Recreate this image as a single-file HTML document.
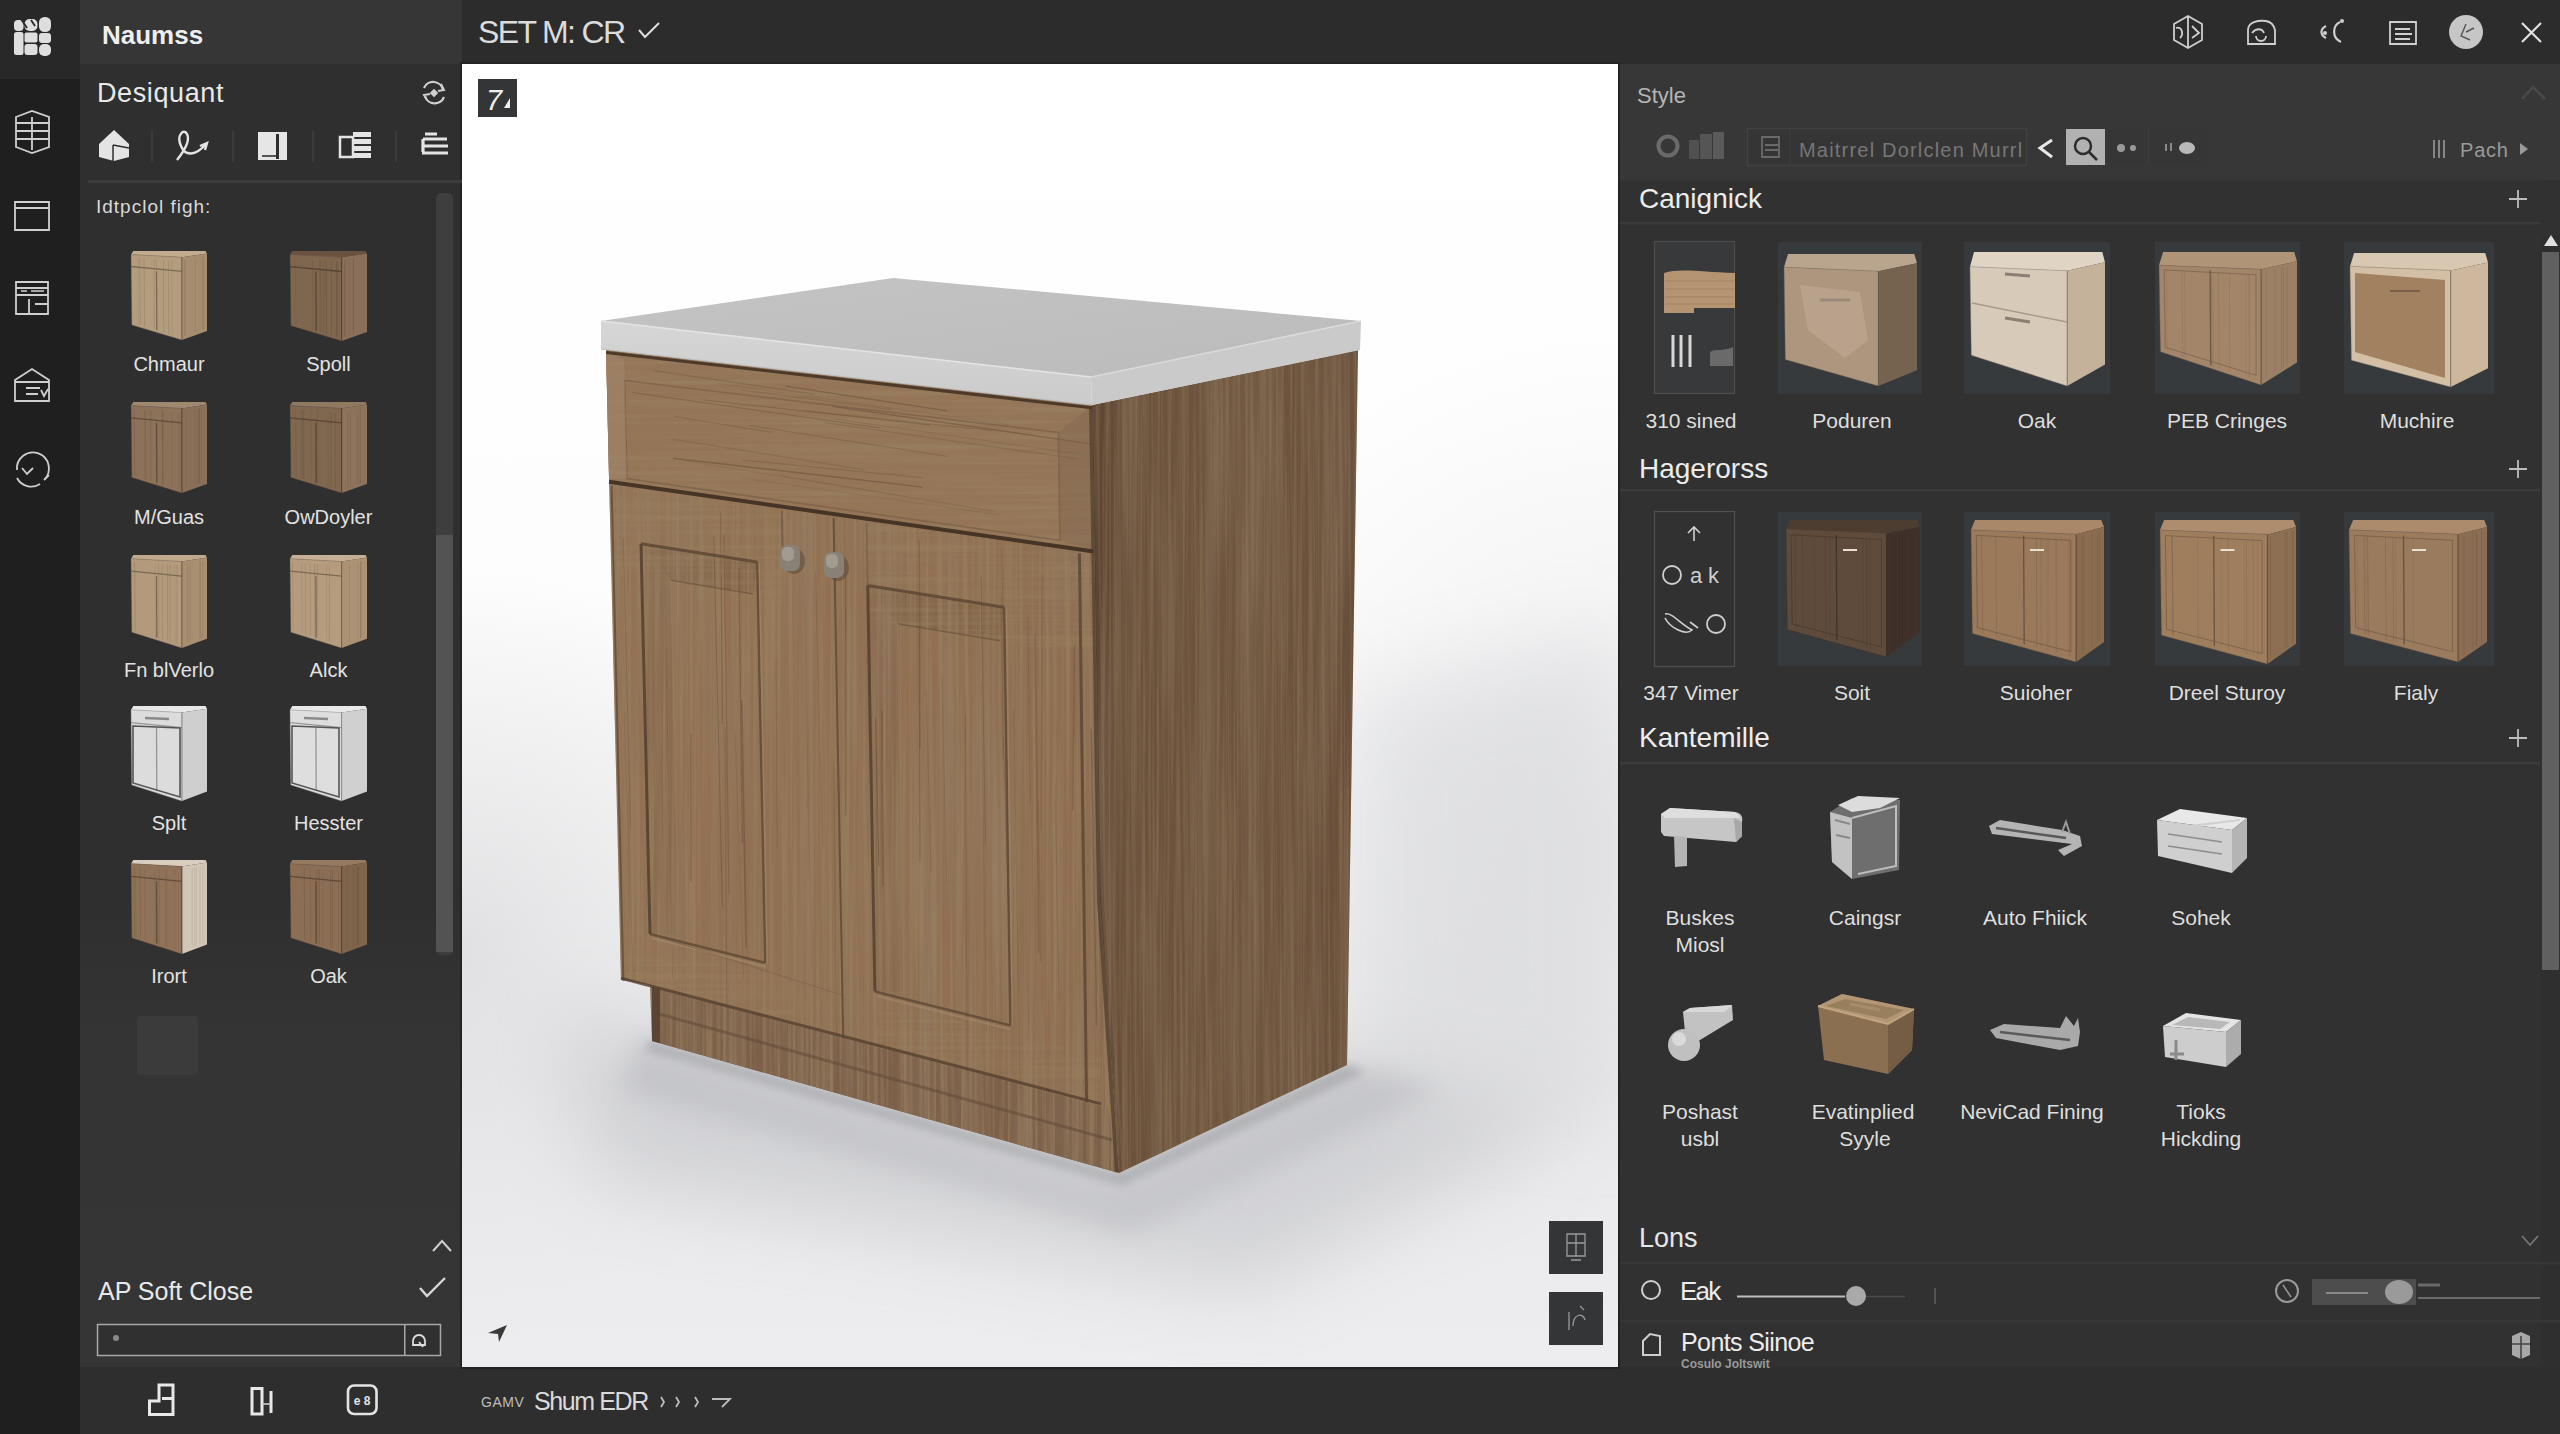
<!DOCTYPE html>
<html><head><meta charset="utf-8">
<style>
*{margin:0;padding:0}
html,body{width:2560px;height:1434px;overflow:hidden;background:#282828}
svg{position:absolute;left:0;top:0;display:block}
text{font-family:"Liberation Sans",sans-serif}
</style></head><body>
<svg width="2560" height="1434" viewBox="0 0 2560 1434">
<rect x="0" y="0" width="2560" height="1434" fill="#2c2c2c"/>
<rect x="0" y="0" width="80" height="1434" fill="#1e1f1e"/>
<rect x="0" y="0" width="80" height="79" fill="#272827"/>
<defs><linearGradient id="lpG" x1="0" y1="0" x2="0" y2="1"><stop offset="0" stop-color="#2f2f2f"/><stop offset="0.66" stop-color="#2f2f2f"/><stop offset="0.76" stop-color="#343434"/><stop offset="1" stop-color="#353535"/></linearGradient></defs>
<rect x="80" y="0" width="382" height="1367" fill="url(#lpG)"/>
<rect x="80" y="0" width="382" height="64" fill="#363636"/>
<rect x="462" y="0" width="2098" height="64" fill="#2c2c2c"/>
<rect x="1618" y="64" width="942" height="1303" fill="#313131"/>
<rect x="1618" y="64" width="942" height="116" fill="#373737"/>
<rect x="80" y="1367" width="2480" height="67" fill="#2e2e2e"/>
<rect x="460" y="62" width="1160" height="1307" fill="#232323"/>
<rect x="14" y="20" width="9.5" height="11" rx="4" fill="#dedede"/><rect x="24.5" y="19" width="13" height="12" rx="5" fill="#dedede"/><rect x="39" y="17" width="12" height="15" rx="5.5" fill="#dedede"/><rect x="14" y="32" width="9.5" height="23" rx="2.5" fill="#dedede"/><rect x="24.5" y="32.5" width="13" height="10" rx="2" fill="#dedede"/><rect x="39" y="33" width="12" height="10" rx="3" fill="#dedede"/><rect x="24.5" y="44" width="13" height="11" rx="3" fill="#dedede"/><rect x="39" y="44" width="12" height="12" rx="5" fill="#dedede"/><path d="M21 19 L27 28 M31 20 L35 26" stroke="#272827" stroke-width="1.8"/><path d="M16 117 L32 111 L49 117 L49 147 L32 153 L16 147 Z M16 123 H49 M16 131 H49 M16 139 H49 M32 117 V150" fill="none" stroke="#cfcfcf" stroke-width="1.8"/><path d="M15 202 H49 V230 H15 Z M15 208 H49" fill="none" stroke="#cfcfcf" stroke-width="1.8"/><path d="M16 282 H48 V314 H16 Z M16 288 H48 M16 295 H48 M29 299 V314 M35 304 H48" fill="none" stroke="#cfcfcf" stroke-width="1.8"/><path d="M21 291 H27 M31 291 H44" stroke="#cfcfcf" stroke-width="1.4"/><path d="M15 380 L32 369 L49 380 V401 H15 Z M15 382 H49 M26 388 H40 M26 394 H38 M41 390 L44 396 L48 389" fill="none" stroke="#cfcfcf" stroke-width="1.8"/><path d="M17 470 A16 16 0 1 1 44 480 M44 480 L49 475 M17 478 A16 16 0 0 0 40 484 M22 468 L27 474 L33 468" fill="none" stroke="#cfcfcf" stroke-width="1.8"/>
<text x="102" y="44" font-size="26" fill="#efefef" text-anchor="start" font-weight="bold">Naumss</text>
<text x="97" y="102" font-size="27" fill="#e8e8e8" text-anchor="start" letter-spacing="0.6">Desiquant</text>
<path d="M424 88 A10 10 0 0 1 443 90 M444 97 A10 10 0 0 1 425 96" fill="none" stroke="#cfcfcf" stroke-width="2.2"/>
<path d="M441 84 L444 90 L438 91 M427 100 L424 95 L430 94" fill="none" stroke="#cfcfcf" stroke-width="2"/>
<rect x="431" y="90" width="6" height="6" fill="#cfcfcf" transform="rotate(45 434 93)"/>
<path d="M99 144 L114 130 L129 144 L129 157 L114 161 L99 157 Z" fill="#e4e4e4"/>
<path d="M113 145 L113 161 M113 145 L129 148" stroke="#2e2e2e" stroke-width="1.5" fill="none"/>
<path d="M177 160 C185 150 190 140 187 134 C184 128 176 135 181 146 C185 156 195 157 207 143 M200 146 L207 143 L205 150" fill="none" stroke="#e4e4e4" stroke-width="2.4"/>
<rect x="258" y="132" width="29" height="28" fill="#e6e6e6"/>
<rect x="276" y="134" width="3" height="25" fill="#2e2e2e"/>
<rect x="262" y="155" width="14" height="2" fill="#555"/>
<path d="M340 137 H353 V157 H340 Z" fill="none" stroke="#e4e4e4" stroke-width="2.5"/>
<rect x="353" y="132" width="18" height="5" fill="#e4e4e4"/>
<rect x="353" y="139" width="18" height="5" fill="#e4e4e4"/>
<rect x="353" y="146" width="18" height="5" fill="#e4e4e4"/>
<rect x="353" y="153" width="18" height="5" fill="#e4e4e4"/>
<path d="M425 134 H437 M423 139 H447 M422 146 H448 M422 153 H448 M423 139 V152" fill="none" stroke="#e4e4e4" stroke-width="3.2"/>
<rect x="151" y="131" width="2" height="31" fill="#3a3a3a"/>
<rect x="232" y="131" width="2" height="31" fill="#3a3a3a"/>
<rect x="312" y="131" width="2" height="31" fill="#3a3a3a"/>
<rect x="395" y="131" width="2" height="31" fill="#3a3a3a"/>
<rect x="88" y="180" width="374" height="3" fill="#3b3d3d"/>
<text x="96" y="213" font-size="19" fill="#d9d9d9" text-anchor="start" letter-spacing="1">Idtpclol figh:</text>
<rect x="436" y="193" width="17" height="762" fill="#3e3e3e" rx="5"/>
<rect x="436" y="535" width="17" height="417" fill="#535353"/>
<polygon points="131.0,254.6 133.3,251.0 205.5,251.0 207.0,253.5 181.9,257.2" fill="#c2ab8f"/><polygon points="181.9,257.2 207.0,253.5 207.0,331.1 181.9,340.0" fill="#a68d70"/><polygon points="131.0,254.6 181.9,257.2 181.9,340.0 131.8,324.9" fill="#b49c7e"/><line x1="139.7" y1="258.6" x2="140.3" y2="325.3" stroke="#7a6a55" stroke-width="0.8" opacity="0.36"/><line x1="168.6" y1="260.5" x2="168.7" y2="333.6" stroke="#7a6a55" stroke-width="0.8" opacity="0.21"/><line x1="156.3" y1="259.7" x2="156.6" y2="330.1" stroke="#7a6a55" stroke-width="0.8" opacity="0.26"/><line x1="163.4" y1="260.2" x2="163.7" y2="332.2" stroke="#7a6a55" stroke-width="0.8" opacity="0.35"/><line x1="137.9" y1="258.5" x2="138.5" y2="324.7" stroke="#7a6a55" stroke-width="0.8" opacity="0.16"/><line x1="171.9" y1="260.7" x2="172.0" y2="334.6" stroke="#7a6a55" stroke-width="0.8" opacity="0.26"/><line x1="168.5" y1="260.5" x2="168.7" y2="333.6" stroke="#7a6a55" stroke-width="0.8" opacity="0.15"/><line x1="154.0" y1="259.6" x2="154.4" y2="329.4" stroke="#7a6a55" stroke-width="0.8" opacity="0.33"/><line x1="144.1" y1="258.9" x2="144.6" y2="326.5" stroke="#7a6a55" stroke-width="0.8" opacity="0.39"/><line x1="202.5" y1="257.2" x2="202.5" y2="329.7" stroke="#7c6954" stroke-width="0.8" opacity="0.35"/><line x1="185.0" y1="259.8" x2="185.0" y2="335.9" stroke="#7c6954" stroke-width="0.8" opacity="0.35"/><line x1="184.9" y1="259.8" x2="184.9" y2="335.9" stroke="#7c6954" stroke-width="0.8" opacity="0.35"/><line x1="195.3" y1="258.2" x2="195.3" y2="332.3" stroke="#7c6954" stroke-width="0.8" opacity="0.35"/><line x1="203.3" y1="257.0" x2="203.3" y2="329.4" stroke="#7c6954" stroke-width="0.8" opacity="0.35"/><line x1="131.1" y1="266.5" x2="181.9" y2="271.3" stroke="#7a6a55" stroke-width="1.3"/><line x1="156.5" y1="271.2" x2="156.8" y2="330.1" stroke="#7a6a55" stroke-width="1.3"/><line x1="181.9" y1="257.2" x2="181.9" y2="340.0" stroke="#635545" stroke-width="1" opacity="0.6"/><line x1="131.0" y1="254.6" x2="181.9" y2="257.2" stroke="#bfaa91" stroke-width="1" opacity="0.7"/><polygon points="131.0,254.6 181.9,257.2 181.9,340.0 131.8,324.9" fill="none" stroke="#6c5d4b" stroke-width="0.8" opacity="0.5"/>
<text x="169.0" y="371" font-size="20" fill="#e2e2e2" text-anchor="middle" >Chmaur</text>
<polygon points="290.0,254.6 292.3,251.0 365.5,251.0 367.0,253.5 341.6,257.3" fill="#6a5240"/><polygon points="341.6,257.3 367.0,253.5 367.0,332.0 341.6,341.0" fill="#8a705a"/><polygon points="290.0,254.6 341.6,257.3 341.6,341.0 290.8,325.7" fill="#7f664f"/><line x1="337.0" y1="261.2" x2="337.0" y2="337.2" stroke="#564535" stroke-width="0.8" opacity="0.39"/><line x1="295.2" y1="258.5" x2="295.9" y2="325.1" stroke="#564535" stroke-width="0.8" opacity="0.17"/><line x1="331.4" y1="260.8" x2="331.5" y2="335.5" stroke="#564535" stroke-width="0.8" opacity="0.33"/><line x1="323.7" y1="260.3" x2="323.9" y2="333.3" stroke="#564535" stroke-width="0.8" opacity="0.23"/><line x1="320.7" y1="260.1" x2="321.0" y2="332.5" stroke="#564535" stroke-width="0.8" opacity="0.30"/><line x1="319.6" y1="260.1" x2="319.9" y2="332.1" stroke="#564535" stroke-width="0.8" opacity="0.19"/><line x1="312.6" y1="259.6" x2="313.0" y2="330.1" stroke="#564535" stroke-width="0.8" opacity="0.25"/><line x1="326.2" y1="260.5" x2="326.4" y2="334.0" stroke="#564535" stroke-width="0.8" opacity="0.40"/><line x1="336.7" y1="261.2" x2="336.7" y2="337.1" stroke="#564535" stroke-width="0.8" opacity="0.29"/><line x1="353.2" y1="258.6" x2="353.2" y2="333.9" stroke="#675443" stroke-width="0.8" opacity="0.35"/><line x1="349.6" y1="259.1" x2="349.6" y2="335.2" stroke="#675443" stroke-width="0.8" opacity="0.35"/><line x1="344.9" y1="259.8" x2="344.9" y2="336.8" stroke="#675443" stroke-width="0.8" opacity="0.35"/><line x1="344.7" y1="259.8" x2="344.7" y2="336.9" stroke="#675443" stroke-width="0.8" opacity="0.35"/><line x1="353.6" y1="258.5" x2="353.6" y2="333.8" stroke="#675443" stroke-width="0.8" opacity="0.35"/><line x1="290.1" y1="266.7" x2="341.6" y2="271.5" stroke="#564535" stroke-width="1.3"/><line x1="315.9" y1="271.4" x2="316.2" y2="331.0" stroke="#564535" stroke-width="1.3"/><line x1="341.6" y1="257.3" x2="341.6" y2="341.0" stroke="#45382b" stroke-width="1" opacity="0.6"/><line x1="290.0" y1="254.6" x2="341.6" y2="257.3" stroke="#927c69" stroke-width="1" opacity="0.7"/><polygon points="290.0,254.6 341.6,257.3 341.6,341.0 290.8,325.7" fill="none" stroke="#4c3d2f" stroke-width="0.8" opacity="0.5"/>
<text x="328.5" y="371" font-size="20" fill="#e2e2e2" text-anchor="middle" >Spoll</text>
<polygon points="131.0,405.6 133.3,402.0 205.5,402.0 207.0,404.5 181.9,408.4" fill="#a08770"/><polygon points="181.9,408.4 207.0,404.5 207.0,483.9 181.9,493.0" fill="#8a7059"/><polygon points="131.0,405.6 181.9,408.4 181.9,493.0 131.8,477.5" fill="#8c7258"/><line x1="144.5" y1="410.1" x2="145.0" y2="479.4" stroke="#5f4d3b" stroke-width="0.8" opacity="0.29"/><line x1="150.5" y1="410.5" x2="151.0" y2="481.2" stroke="#5f4d3b" stroke-width="0.8" opacity="0.30"/><line x1="162.2" y1="411.3" x2="162.5" y2="484.6" stroke="#5f4d3b" stroke-width="0.8" opacity="0.17"/><line x1="134.2" y1="409.4" x2="134.8" y2="476.3" stroke="#5f4d3b" stroke-width="0.8" opacity="0.36"/><line x1="145.5" y1="410.2" x2="146.0" y2="479.6" stroke="#5f4d3b" stroke-width="0.8" opacity="0.21"/><line x1="179.2" y1="412.4" x2="179.2" y2="489.6" stroke="#5f4d3b" stroke-width="0.8" opacity="0.27"/><line x1="171.9" y1="411.9" x2="172.0" y2="487.5" stroke="#5f4d3b" stroke-width="0.8" opacity="0.27"/><line x1="162.8" y1="411.3" x2="163.1" y2="484.8" stroke="#5f4d3b" stroke-width="0.8" opacity="0.19"/><line x1="162.7" y1="411.3" x2="162.9" y2="484.7" stroke="#5f4d3b" stroke-width="0.8" opacity="0.37"/><line x1="194.9" y1="409.4" x2="194.9" y2="485.3" stroke="#675442" stroke-width="0.8" opacity="0.35"/><line x1="199.3" y1="408.7" x2="199.3" y2="483.7" stroke="#675442" stroke-width="0.8" opacity="0.35"/><line x1="197.9" y1="408.9" x2="197.9" y2="484.2" stroke="#675442" stroke-width="0.8" opacity="0.35"/><line x1="185.7" y1="410.8" x2="185.7" y2="488.6" stroke="#675442" stroke-width="0.8" opacity="0.35"/><line x1="199.6" y1="408.7" x2="199.6" y2="483.6" stroke="#675442" stroke-width="0.8" opacity="0.35"/><line x1="131.1" y1="417.9" x2="181.9" y2="422.8" stroke="#5f4d3b" stroke-width="1.3"/><line x1="156.5" y1="422.7" x2="156.8" y2="482.9" stroke="#5f4d3b" stroke-width="1.3"/><line x1="181.9" y1="408.4" x2="181.9" y2="493.0" stroke="#4d3e30" stroke-width="1" opacity="0.6"/><line x1="131.0" y1="405.6" x2="181.9" y2="408.4" stroke="#9d8771" stroke-width="1" opacity="0.7"/><polygon points="131.0,405.6 181.9,408.4 181.9,493.0 131.8,477.5" fill="none" stroke="#544434" stroke-width="0.8" opacity="0.5"/>
<text x="169.0" y="524" font-size="20" fill="#e2e2e2" text-anchor="middle" >M/Guas</text>
<polygon points="290.0,405.6 292.3,402.0 365.5,402.0 367.0,404.5 341.6,408.4" fill="#917860"/><polygon points="341.6,408.4 367.0,404.5 367.0,483.9 341.6,493.0" fill="#8d735b"/><polygon points="290.0,405.6 341.6,408.4 341.6,493.0 290.8,477.5" fill="#80674f"/><line x1="303.6" y1="410.1" x2="304.1" y2="479.3" stroke="#574635" stroke-width="0.8" opacity="0.18"/><line x1="311.0" y1="410.6" x2="311.4" y2="481.5" stroke="#574635" stroke-width="0.8" opacity="0.19"/><line x1="295.7" y1="409.6" x2="296.3" y2="477.0" stroke="#574635" stroke-width="0.8" opacity="0.25"/><line x1="335.2" y1="412.2" x2="335.3" y2="488.6" stroke="#574635" stroke-width="0.8" opacity="0.35"/><line x1="328.1" y1="411.7" x2="328.3" y2="486.5" stroke="#574635" stroke-width="0.8" opacity="0.21"/><line x1="317.5" y1="411.0" x2="317.8" y2="483.4" stroke="#574635" stroke-width="0.8" opacity="0.22"/><line x1="300.6" y1="409.9" x2="301.2" y2="478.5" stroke="#574635" stroke-width="0.8" opacity="0.18"/><line x1="302.6" y1="410.1" x2="303.1" y2="479.0" stroke="#574635" stroke-width="0.8" opacity="0.38"/><line x1="331.1" y1="411.9" x2="331.2" y2="487.4" stroke="#574635" stroke-width="0.8" opacity="0.35"/><line x1="360.4" y1="408.5" x2="360.4" y2="483.3" stroke="#695644" stroke-width="0.8" opacity="0.35"/><line x1="348.1" y1="410.4" x2="348.1" y2="487.7" stroke="#695644" stroke-width="0.8" opacity="0.35"/><line x1="350.4" y1="410.0" x2="350.4" y2="486.8" stroke="#695644" stroke-width="0.8" opacity="0.35"/><line x1="356.9" y1="409.1" x2="356.9" y2="484.5" stroke="#695644" stroke-width="0.8" opacity="0.35"/><line x1="359.0" y1="408.7" x2="359.0" y2="483.8" stroke="#695644" stroke-width="0.8" opacity="0.35"/><line x1="290.1" y1="417.9" x2="341.6" y2="422.8" stroke="#574635" stroke-width="1.3"/><line x1="315.9" y1="422.7" x2="316.2" y2="482.9" stroke="#574635" stroke-width="1.3"/><line x1="341.6" y1="408.4" x2="341.6" y2="493.0" stroke="#46382b" stroke-width="1" opacity="0.6"/><line x1="290.0" y1="405.6" x2="341.6" y2="408.4" stroke="#937d69" stroke-width="1" opacity="0.7"/><polygon points="290.0,405.6 341.6,408.4 341.6,493.0 290.8,477.5" fill="none" stroke="#4c3d2f" stroke-width="0.8" opacity="0.5"/>
<text x="328.5" y="524" font-size="20" fill="#e2e2e2" text-anchor="middle" >OwDoyler</text>
<polygon points="131.0,558.7 133.3,555.0 205.5,555.0 207.0,557.6 181.9,561.5" fill="#c0a98d"/><polygon points="181.9,561.5 207.0,557.6 207.0,638.7 181.9,648.0" fill="#a88f72"/><polygon points="131.0,558.7 181.9,561.5 181.9,648.0 131.8,632.2" fill="#b39a7c"/><line x1="162.1" y1="564.5" x2="162.4" y2="639.4" stroke="#796854" stroke-width="0.8" opacity="0.34"/><line x1="170.0" y1="565.0" x2="170.2" y2="641.8" stroke="#796854" stroke-width="0.8" opacity="0.39"/><line x1="167.5" y1="564.9" x2="167.7" y2="641.0" stroke="#796854" stroke-width="0.8" opacity="0.38"/><line x1="134.9" y1="562.7" x2="135.6" y2="631.2" stroke="#796854" stroke-width="0.8" opacity="0.27"/><line x1="176.8" y1="565.5" x2="176.9" y2="643.8" stroke="#796854" stroke-width="0.8" opacity="0.31"/><line x1="174.8" y1="565.4" x2="174.9" y2="643.3" stroke="#796854" stroke-width="0.8" opacity="0.18"/><line x1="155.1" y1="564.0" x2="155.4" y2="637.3" stroke="#796854" stroke-width="0.8" opacity="0.21"/><line x1="158.5" y1="564.2" x2="158.8" y2="638.3" stroke="#796854" stroke-width="0.8" opacity="0.29"/><line x1="134.2" y1="562.6" x2="134.8" y2="630.9" stroke="#796854" stroke-width="0.8" opacity="0.20"/><line x1="190.0" y1="563.2" x2="190.0" y2="642.0" stroke="#7e6b55" stroke-width="0.8" opacity="0.35"/><line x1="202.8" y1="561.3" x2="202.8" y2="637.3" stroke="#7e6b55" stroke-width="0.8" opacity="0.35"/><line x1="199.8" y1="561.7" x2="199.8" y2="638.4" stroke="#7e6b55" stroke-width="0.8" opacity="0.35"/><line x1="187.6" y1="563.6" x2="187.6" y2="642.9" stroke="#7e6b55" stroke-width="0.8" opacity="0.35"/><line x1="200.4" y1="561.6" x2="200.4" y2="638.1" stroke="#7e6b55" stroke-width="0.8" opacity="0.35"/><line x1="131.1" y1="571.2" x2="181.9" y2="576.2" stroke="#796854" stroke-width="1.3"/><line x1="156.5" y1="576.1" x2="156.8" y2="637.7" stroke="#796854" stroke-width="1.3"/><line x1="181.9" y1="561.5" x2="181.9" y2="648.0" stroke="#625444" stroke-width="1" opacity="0.6"/><line x1="131.0" y1="558.7" x2="181.9" y2="561.5" stroke="#bea98f" stroke-width="1" opacity="0.7"/><polygon points="131.0,558.7 181.9,561.5 181.9,648.0 131.8,632.2" fill="none" stroke="#6b5c4a" stroke-width="0.8" opacity="0.5"/>
<text x="169.0" y="677" font-size="20" fill="#e2e2e2" text-anchor="middle" >Fn blVerlo</text>
<polygon points="290.0,558.7 292.3,555.0 365.5,555.0 367.0,557.6 341.6,561.5" fill="#c5b095"/><polygon points="341.6,561.5 367.0,557.6 367.0,638.7 341.6,648.0" fill="#ab9275"/><polygon points="290.0,558.7 341.6,561.5 341.6,648.0 290.8,632.2" fill="#b59c7e"/><line x1="329.4" y1="565.0" x2="329.6" y2="641.8" stroke="#7b6a55" stroke-width="0.8" opacity="0.36"/><line x1="315.1" y1="564.1" x2="315.5" y2="637.5" stroke="#7b6a55" stroke-width="0.8" opacity="0.22"/><line x1="292.6" y1="562.6" x2="293.3" y2="630.8" stroke="#7b6a55" stroke-width="0.8" opacity="0.32"/><line x1="314.4" y1="564.0" x2="314.8" y2="637.3" stroke="#7b6a55" stroke-width="0.8" opacity="0.34"/><line x1="309.9" y1="563.7" x2="310.4" y2="635.9" stroke="#7b6a55" stroke-width="0.8" opacity="0.34"/><line x1="305.3" y1="563.4" x2="305.8" y2="634.5" stroke="#7b6a55" stroke-width="0.8" opacity="0.35"/><line x1="326.5" y1="564.8" x2="326.7" y2="640.9" stroke="#7b6a55" stroke-width="0.8" opacity="0.25"/><line x1="317.6" y1="564.2" x2="317.9" y2="638.2" stroke="#7b6a55" stroke-width="0.8" opacity="0.32"/><line x1="301.6" y1="563.2" x2="302.1" y2="633.4" stroke="#7b6a55" stroke-width="0.8" opacity="0.29"/><line x1="360.5" y1="561.6" x2="360.5" y2="638.1" stroke="#806d57" stroke-width="0.8" opacity="0.35"/><line x1="349.5" y1="563.3" x2="349.5" y2="642.1" stroke="#806d57" stroke-width="0.8" opacity="0.35"/><line x1="360.5" y1="561.6" x2="360.5" y2="638.1" stroke="#806d57" stroke-width="0.8" opacity="0.35"/><line x1="358.1" y1="562.0" x2="358.1" y2="639.0" stroke="#806d57" stroke-width="0.8" opacity="0.35"/><line x1="361.3" y1="561.5" x2="361.3" y2="637.8" stroke="#806d57" stroke-width="0.8" opacity="0.35"/><line x1="290.1" y1="571.2" x2="341.6" y2="576.2" stroke="#7b6a55" stroke-width="1.3"/><line x1="315.9" y1="576.1" x2="316.2" y2="637.7" stroke="#7b6a55" stroke-width="1.3"/><line x1="341.6" y1="561.5" x2="341.6" y2="648.0" stroke="#635545" stroke-width="1" opacity="0.6"/><line x1="290.0" y1="558.7" x2="341.6" y2="561.5" stroke="#c0aa91" stroke-width="1" opacity="0.7"/><polygon points="290.0,558.7 341.6,561.5 341.6,648.0 290.8,632.2" fill="none" stroke="#6c5d4b" stroke-width="0.8" opacity="0.5"/>
<text x="328.5" y="677" font-size="20" fill="#e2e2e2" text-anchor="middle" >Alck</text>
<polygon points="131.0,709.8 133.3,706.0 205.5,706.0 207.0,708.7 181.9,712.6" fill="#e8e8e8"/><polygon points="181.9,712.6 207.0,708.7 207.0,791.5 181.9,801.0" fill="#cfcfcf"/><polygon points="131.0,709.8 181.9,712.6 181.9,801.0 131.8,784.9" fill="#dcdcdc"/><line x1="131.1" y1="722.6" x2="181.9" y2="727.7" stroke="#959595" stroke-width="1.3"/><line x1="156.5" y1="727.6" x2="156.8" y2="790.5" stroke="#959595" stroke-width="1.3"/><line x1="181.9" y1="712.6" x2="181.9" y2="801.0" stroke="#797979" stroke-width="1" opacity="0.6"/><line x1="131.0" y1="709.8" x2="181.9" y2="712.6" stroke="#e1e1e1" stroke-width="1" opacity="0.7"/><polygon points="131.0,709.8 181.9,712.6 181.9,801.0 131.8,784.9" fill="none" stroke="#848484" stroke-width="0.8" opacity="0.5"/>
<polygon points="133.0,726.0 180.0,728.0 180.0,797.0 133.0,783.0" fill="none" stroke="#555" stroke-width="1.6"/>
<line x1="145.0" y1="718.0" x2="169.0" y2="719.0" stroke="#8a8a8a" stroke-width="2.5"/>
<text x="169.0" y="830" font-size="20" fill="#e2e2e2" text-anchor="middle" >Splt</text>
<polygon points="290.0,709.8 292.3,706.0 365.5,706.0 367.0,708.7 341.6,712.6" fill="#e9e9e9"/><polygon points="341.6,712.6 367.0,708.7 367.0,791.5 341.6,801.0" fill="#d0d0d0"/><polygon points="290.0,709.8 341.6,712.6 341.6,801.0 290.8,784.9" fill="#dedede"/><line x1="290.1" y1="722.6" x2="341.6" y2="727.7" stroke="#969696" stroke-width="1.3"/><line x1="315.9" y1="727.6" x2="316.2" y2="790.5" stroke="#969696" stroke-width="1.3"/><line x1="341.6" y1="712.6" x2="341.6" y2="801.0" stroke="#7a7a7a" stroke-width="1" opacity="0.6"/><line x1="290.0" y1="709.8" x2="341.6" y2="712.6" stroke="#e2e2e2" stroke-width="1" opacity="0.7"/><polygon points="290.0,709.8 341.6,712.6 341.6,801.0 290.8,784.9" fill="none" stroke="#858585" stroke-width="0.8" opacity="0.5"/>
<polygon points="292.0,726.0 339.0,728.0 339.0,797.0 292.0,783.0" fill="none" stroke="#555" stroke-width="1.6"/>
<line x1="304.0" y1="718.0" x2="328.0" y2="719.0" stroke="#8a8a8a" stroke-width="2.5"/>
<text x="328.5" y="830" font-size="20" fill="#e2e2e2" text-anchor="middle" >Hesster</text>
<polygon points="131.0,863.8 133.3,860.0 205.5,860.0 207.0,862.6 181.9,866.6" fill="#d8cdbf"/><polygon points="181.9,866.6 207.0,862.6 207.0,944.6 181.9,954.0" fill="#d2c6b6"/><polygon points="131.0,863.8 181.9,866.6 181.9,954.0 131.8,938.0" fill="#8f7257"/><line x1="154.8" y1="869.1" x2="155.2" y2="943.1" stroke="#614d3b" stroke-width="0.8" opacity="0.24"/><line x1="139.9" y1="868.1" x2="140.5" y2="938.5" stroke="#614d3b" stroke-width="0.8" opacity="0.37"/><line x1="133.9" y1="867.7" x2="134.5" y2="936.7" stroke="#614d3b" stroke-width="0.8" opacity="0.28"/><line x1="174.7" y1="870.5" x2="174.8" y2="949.2" stroke="#614d3b" stroke-width="0.8" opacity="0.17"/><line x1="159.0" y1="869.4" x2="159.3" y2="944.3" stroke="#614d3b" stroke-width="0.8" opacity="0.30"/><line x1="135.5" y1="867.8" x2="136.1" y2="937.1" stroke="#614d3b" stroke-width="0.8" opacity="0.24"/><line x1="165.8" y1="869.8" x2="166.0" y2="946.4" stroke="#614d3b" stroke-width="0.8" opacity="0.26"/><line x1="166.8" y1="869.9" x2="167.0" y2="946.7" stroke="#614d3b" stroke-width="0.8" opacity="0.19"/><line x1="144.5" y1="868.4" x2="145.0" y2="939.9" stroke="#614d3b" stroke-width="0.8" opacity="0.18"/><line x1="194.6" y1="867.6" x2="194.6" y2="946.3" stroke="#9d9488" stroke-width="0.8" opacity="0.35"/><line x1="203.0" y1="866.3" x2="203.0" y2="943.1" stroke="#9d9488" stroke-width="0.8" opacity="0.35"/><line x1="196.3" y1="867.3" x2="196.3" y2="945.6" stroke="#9d9488" stroke-width="0.8" opacity="0.35"/><line x1="200.0" y1="866.7" x2="200.0" y2="944.2" stroke="#9d9488" stroke-width="0.8" opacity="0.35"/><line x1="192.1" y1="868.0" x2="192.1" y2="947.2" stroke="#9d9488" stroke-width="0.8" opacity="0.35"/><line x1="131.1" y1="876.4" x2="181.9" y2="881.4" stroke="#614d3b" stroke-width="1.3"/><line x1="156.5" y1="881.3" x2="156.8" y2="943.6" stroke="#614d3b" stroke-width="1.3"/><line x1="181.9" y1="866.6" x2="181.9" y2="954.0" stroke="#4e3e2f" stroke-width="1" opacity="0.6"/><line x1="131.0" y1="863.8" x2="181.9" y2="866.6" stroke="#9f8770" stroke-width="1" opacity="0.7"/><polygon points="131.0,863.8 181.9,866.6 181.9,954.0 131.8,938.0" fill="none" stroke="#554434" stroke-width="0.8" opacity="0.5"/>
<text x="169.0" y="983" font-size="20" fill="#e2e2e2" text-anchor="middle" >Irort</text>
<polygon points="290.0,863.8 292.3,860.0 365.5,860.0 367.0,862.6 341.6,866.6" fill="#957a60"/><polygon points="341.6,866.6 367.0,862.6 367.0,944.6 341.6,954.0" fill="#80654d"/><polygon points="290.0,863.8 341.6,866.6 341.6,954.0 290.8,938.0" fill="#8b6e53"/><line x1="319.1" y1="869.4" x2="319.4" y2="944.6" stroke="#5e4a38" stroke-width="0.8" opacity="0.26"/><line x1="319.4" y1="869.5" x2="319.7" y2="944.7" stroke="#5e4a38" stroke-width="0.8" opacity="0.20"/><line x1="330.4" y1="870.2" x2="330.5" y2="948.0" stroke="#5e4a38" stroke-width="0.8" opacity="0.36"/><line x1="322.9" y1="869.7" x2="323.2" y2="945.7" stroke="#5e4a38" stroke-width="0.8" opacity="0.19"/><line x1="316.8" y1="869.3" x2="317.1" y2="943.9" stroke="#5e4a38" stroke-width="0.8" opacity="0.23"/><line x1="304.2" y1="868.4" x2="304.7" y2="940.1" stroke="#5e4a38" stroke-width="0.8" opacity="0.39"/><line x1="338.9" y1="870.8" x2="338.9" y2="950.5" stroke="#5e4a38" stroke-width="0.8" opacity="0.16"/><line x1="332.5" y1="870.3" x2="332.6" y2="948.6" stroke="#5e4a38" stroke-width="0.8" opacity="0.30"/><line x1="310.3" y1="868.8" x2="310.8" y2="941.9" stroke="#5e4a38" stroke-width="0.8" opacity="0.22"/><line x1="357.9" y1="867.1" x2="357.9" y2="945.0" stroke="#604b39" stroke-width="0.8" opacity="0.35"/><line x1="353.4" y1="867.7" x2="353.4" y2="946.6" stroke="#604b39" stroke-width="0.8" opacity="0.35"/><line x1="358.1" y1="867.0" x2="358.1" y2="944.9" stroke="#604b39" stroke-width="0.8" opacity="0.35"/><line x1="357.6" y1="867.1" x2="357.6" y2="945.1" stroke="#604b39" stroke-width="0.8" opacity="0.35"/><line x1="346.8" y1="868.8" x2="346.8" y2="949.1" stroke="#604b39" stroke-width="0.8" opacity="0.35"/><line x1="290.1" y1="876.4" x2="341.6" y2="881.4" stroke="#5e4a38" stroke-width="1.3"/><line x1="315.9" y1="881.3" x2="316.2" y2="943.6" stroke="#5e4a38" stroke-width="1.3"/><line x1="341.6" y1="866.6" x2="341.6" y2="954.0" stroke="#4c3c2d" stroke-width="1" opacity="0.6"/><line x1="290.0" y1="863.8" x2="341.6" y2="866.6" stroke="#9c836c" stroke-width="1" opacity="0.7"/><polygon points="290.0,863.8 341.6,866.6 341.6,954.0 290.8,938.0" fill="none" stroke="#534231" stroke-width="0.8" opacity="0.5"/>
<text x="328.5" y="983" font-size="20" fill="#e2e2e2" text-anchor="middle" >Oak</text>
<rect x="137" y="1016" width="61" height="59" rx="4" fill="#3b3b3b"/>
<path d="M433 1251 L442 1241 L451 1251" fill="none" stroke="#cfcfcf" stroke-width="2"/>
<text x="98" y="1300" font-size="25" fill="#e8e8e8" text-anchor="start" >AP Soft Close</text>
<path d="M420 1288 L427 1296 L445 1278" fill="none" stroke="#d8d8d8" stroke-width="2.4"/>
<rect x="97.5" y="1324.5" width="343" height="31" fill="#303030" stroke="#a8a8a8" stroke-width="1.5"/>
<rect x="404" y="1325" width="1.5" height="30" fill="#a8a8a8"/>
<circle cx="116" cy="1338" r="3" fill="#8a8a8a"/>
<path d="M413 1341 A6 6 0 1 1 425 1341 L425 1345 L413 1345 Z M419 1342 L423 1347" fill="none" stroke="#dcdcdc" stroke-width="1.8"/>
<defs><clipPath id="vpClip"><rect x="462" y="64" width="1156" height="1303"/></clipPath></defs>
<g clip-path="url(#vpClip)">
<defs>
<linearGradient id="bgR" x1="0" y1="0" x2="0" y2="1"><stop offset="0" stop-color="#ffffff"/><stop offset="0.4" stop-color="#fdfdfd"/><stop offset="0.6" stop-color="#f3f3f4"/><stop offset="0.78" stop-color="#e9e9eb"/><stop offset="1" stop-color="#ededef"/></linearGradient>
<radialGradient id="bgL" cx="0" cy="0.68" r="0.3"><stop offset="0" stop-color="#dcdcde" stop-opacity="0.75"/><stop offset="1" stop-color="#e8e8ea" stop-opacity="0"/></radialGradient>
<radialGradient id="bgSide" cx="1" cy="0.6" r="0.4"><stop offset="0" stop-color="#e4e4e6" stop-opacity="0.8"/><stop offset="1" stop-color="#eeeeef" stop-opacity="0"/></radialGradient>
<filter id="blur30" x="-50%" y="-50%" width="200%" height="200%"><feGaussianBlur stdDeviation="30"/></filter>
<filter id="blur40" x="-50%" y="-50%" width="200%" height="200%"><feGaussianBlur stdDeviation="40"/></filter>
<filter id="blur4" x="-50%" y="-50%" width="200%" height="200%"><feGaussianBlur stdDeviation="4"/></filter>
<filter id="blur12" x="-50%" y="-50%" width="200%" height="200%"><feGaussianBlur stdDeviation="12"/></filter>
<filter id="grainV" x="0" y="0" width="100%" height="100%"><feTurbulence type="fractalNoise" baseFrequency="0.35 0.004" numOctaves="3" seed="3"/><feColorMatrix type="matrix" values="0 0 0 0 0.32  0 0 0 0 0.22  0 0 0 0 0.12  0 0 0 -2.4 1.5"/></filter>
<filter id="grainV2" x="0" y="0" width="100%" height="100%"><feTurbulence type="fractalNoise" baseFrequency="0.3 0.004" numOctaves="3" seed="11"/><feColorMatrix type="matrix" values="0 0 0 0 0.32  0 0 0 0 0.22  0 0 0 0 0.12  0 0 0 -2.4 1.5"/></filter>
<filter id="grainBroad" x="0" y="0" width="100%" height="100%"><feTurbulence type="fractalNoise" baseFrequency="0.05 0.003" numOctaves="2" seed="17"/><feColorMatrix type="matrix" values="0 0 0 0 0.30  0 0 0 0 0.22  0 0 0 0 0.15  0 0 0 -3 1.7"/></filter>
<filter id="grainH" x="0" y="0" width="100%" height="100%"><feTurbulence type="fractalNoise" baseFrequency="0.004 0.2" numOctaves="3" seed="5"/><feColorMatrix type="matrix" values="0 0 0 0 0.32  0 0 0 0 0.22  0 0 0 0 0.12  0 0 0 -2.4 1.5"/></filter>
<linearGradient id="sideG" x1="0" y1="0" x2="1" y2="0"><stop offset="0" stop-color="#5a4332"/><stop offset="0.12" stop-color="#6a513c"/><stop offset="0.6" stop-color="#6e553f"/><stop offset="1" stop-color="#684f3b"/></linearGradient>
<linearGradient id="frontG" x1="0" y1="0" x2="1" y2="0.3"><stop offset="0" stop-color="#947355"/><stop offset="1" stop-color="#8e6d50"/></linearGradient>
<linearGradient id="topG" x1="0" y1="0" x2="1" y2="1"><stop offset="0" stop-color="#c4c4c4"/><stop offset="1" stop-color="#bbbbbb"/></linearGradient>
<linearGradient id="edgeF" x1="0" y1="0" x2="0" y2="1"><stop offset="0" stop-color="#d6d6d6"/><stop offset="1" stop-color="#cbcbcb"/></linearGradient>
<clipPath id="clipFront"><polygon points="606,350 1092,405 1100,900 1119,1173 652,1041 650,985 621,980"/></clipPath>
<clipPath id="clipSide"><polygon points="1092,405 1358,350 1347,1065 1119,1173 1100,900"/></clipPath>
<clipPath id="clipDrawer"><polygon points="606.0,350.0 1092.0,405.0 1093.9,550.1 609.1,480.4"/></clipPath>
<clipPath id="clipRails"><polygon points="609.2,485.4 783.7,510.7 785.6,605.8 611.4,576.8"/><polygon points="866.1,522.7 1093.9,555.7 1095.2,657.4 867.8,619.5"/><polygon points="620.0,939.1 793.0,982.7 793.8,1025.4 621.0,980.0"/><polygon points="874.6,1000.0 1100.4,1056.9 1101.0,1106.0 875.4,1046.8"/></clipPath>
</defs>
<rect x="462" y="64" width="1156" height="1303" fill="url(#bgR)"/>
<rect x="462" y="64" width="1156" height="1303" fill="url(#bgL)"/>
<rect x="462" y="64" width="1156" height="1303" fill="url(#bgSide)"/>
<polygon points="1360.0,700.0 1618.0,640.0 1618.0,1120.0 1360.0,1080.0" fill="#d6d7da" opacity="0.55" filter="url(#blur40)"/>
<polygon points="560.0,1010.0 1119.0,1185.0 1360.0,1062.0 1580.0,1120.0 1250.0,1290.0 600.0,1180.0" fill="#b4b5ba" opacity="0.45" filter="url(#blur40)"/>
<polygon points="640.0,1035.0 1119.0,1175.0 1347.0,1063.0 1440.0,1090.0 1130.0,1235.0 620.0,1090.0" fill="#a8a9ae" opacity="0.35" filter="url(#blur12)"/>
<polygon points="650.0,1040.0 1119.0,1172.0 1347.0,1064.0 1365.0,1072.0 1122.0,1186.0 645.0,1050.0" fill="#6d6e72" opacity="0.3" filter="url(#blur4)"/>
<polygon points="1092.0,405.0 1358.0,350.0 1347.0,1065.0 1119.0,1173.0 1100.0,900.0" fill="url(#sideG)"/>
<rect x="1090" y="345" width="270" height="835" filter="url(#grainV)" clip-path="url(#clipSide)" opacity="0.42"/>
<polygon points="606.0,350.0 1092.0,405.0 1100.0,900.0 1119.0,1173.0 652.0,1041.0 650.0,985.0 621.0,980.0" fill="url(#frontG)"/>
<polygon points="652.0,987.0 1108.0,1108.0 1119.0,1173.0 652.0,1041.0" fill="#7c6049"/>
<polygon points="641.0,543.8 757.2,562.1 753.0,593.9 670.8,580.3" fill="#6f553f" opacity="0.35"/><polygon points="641.0,543.8 670.8,580.3 678.7,934.8 650.0,934.0" fill="#7a5f48" opacity="0.3"/>
<polygon points="867.7,585.5 1004.2,607.2 999.9,640.8 897.3,623.7" fill="#6f553f" opacity="0.35"/><polygon points="867.7,585.5 897.3,623.7 903.6,992.0 874.9,991.5" fill="#7a5f48" opacity="0.3"/>
<rect x="600" y="345" width="520" height="835" filter="url(#grainV2)" clip-path="url(#clipFront)" opacity="0.75"/>
<rect x="600" y="345" width="520" height="835" filter="url(#grainBroad)" clip-path="url(#clipFront)" opacity="0.35"/>
<rect x="1090" y="345" width="270" height="835" filter="url(#grainBroad)" clip-path="url(#clipSide)" opacity="0.3"/>
<rect x="600" y="345" width="500" height="215" fill="#957557" clip-path="url(#clipDrawer)"/>
<rect x="600" y="345" width="500" height="215" filter="url(#grainH)" clip-path="url(#clipDrawer)" opacity="0.7"/>
<rect x="600" y="470" width="510" height="640" filter="url(#grainH)" clip-path="url(#clipRails)" opacity="0.45"/>
<line x1="919.3" y1="540.2" x2="920.1" y2="749.0" stroke="#5a4331" stroke-width="1.3" opacity="0.32"/>
<line x1="1042.0" y1="574.5" x2="1041.1" y2="829.3" stroke="#5a4331" stroke-width="0.8" opacity="0.28"/>
<line x1="623.3" y1="538.2" x2="630.5" y2="829.0" stroke="#5a4331" stroke-width="0.8" opacity="0.30"/>
<line x1="1001.6" y1="547.5" x2="1008.8" y2="907.0" stroke="#5a4331" stroke-width="0.9" opacity="0.19"/>
<line x1="1074.4" y1="645.5" x2="1072.7" y2="810.2" stroke="#5a4331" stroke-width="1.4" opacity="0.30"/>
<line x1="1003.3" y1="736.2" x2="1012.1" y2="1022.2" stroke="#5a4331" stroke-width="1.0" opacity="0.29"/>
<line x1="1013.7" y1="709.1" x2="1019.9" y2="1084.5" stroke="#5a4331" stroke-width="1.3" opacity="0.16"/>
<line x1="721.3" y1="575.8" x2="721.8" y2="725.1" stroke="#5a4331" stroke-width="0.7" opacity="0.22"/>
<line x1="919.0" y1="627.1" x2="920.0" y2="861.5" stroke="#5a4331" stroke-width="0.9" opacity="0.38"/>
<line x1="926.0" y1="690.8" x2="931.2" y2="872.8" stroke="#5a4331" stroke-width="0.8" opacity="0.24"/>
<line x1="1091.1" y1="728.8" x2="1096.7" y2="1025.3" stroke="#5a4331" stroke-width="1.4" opacity="0.34"/>
<line x1="720.5" y1="512.7" x2="722.7" y2="723.0" stroke="#5a4331" stroke-width="0.8" opacity="0.39"/>
<line x1="1035.2" y1="633.3" x2="1038.7" y2="953.0" stroke="#5a4331" stroke-width="1.5" opacity="0.26"/>
<line x1="738.9" y1="568.1" x2="742.3" y2="843.1" stroke="#5a4331" stroke-width="1.2" opacity="0.37"/>
<line x1="803.9" y1="571.7" x2="811.6" y2="966.1" stroke="#5a4331" stroke-width="0.7" opacity="0.16"/>
<line x1="665.9" y1="648.4" x2="672.5" y2="977.8" stroke="#5a4331" stroke-width="0.7" opacity="0.25"/>
<line x1="1093.9" y1="699.8" x2="1102.6" y2="1106.4" stroke="#5a4331" stroke-width="0.6" opacity="0.33"/>
<line x1="941.9" y1="675.2" x2="946.6" y2="883.6" stroke="#5a4331" stroke-width="0.7" opacity="0.26"/>
<line x1="833.7" y1="760.7" x2="836.5" y2="1036.6" stroke="#5a4331" stroke-width="1.1" opacity="0.19"/>
<line x1="1054.8" y1="782.9" x2="1059.2" y2="1005.1" stroke="#5a4331" stroke-width="1.2" opacity="0.19"/>
<line x1="981.0" y1="682.7" x2="986.6" y2="1032.6" stroke="#5a4331" stroke-width="0.6" opacity="0.23"/>
<line x1="624.0" y1="712.9" x2="633.5" y2="983.3" stroke="#5a4331" stroke-width="0.9" opacity="0.16"/>
<line x1="1038.4" y1="799.7" x2="1040.5" y2="961.9" stroke="#5a4331" stroke-width="0.7" opacity="0.34"/>
<line x1="981.0" y1="576.1" x2="985.5" y2="843.2" stroke="#5a4331" stroke-width="0.9" opacity="0.37"/>
<line x1="815.4" y1="571.6" x2="822.8" y2="846.5" stroke="#5a4331" stroke-width="0.8" opacity="0.23"/>
<line x1="1093.9" y1="731.9" x2="1097.4" y2="994.9" stroke="#5a4331" stroke-width="0.7" opacity="0.21"/>
<line x1="776.1" y1="658.7" x2="777.2" y2="849.1" stroke="#5a4331" stroke-width="0.7" opacity="0.31"/>
<line x1="725.0" y1="727.1" x2="726.8" y2="1007.8" stroke="#5a4331" stroke-width="0.8" opacity="0.32"/>
<line x1="713.8" y1="536.2" x2="722.4" y2="906.8" stroke="#5a4331" stroke-width="1.1" opacity="0.35"/>
<line x1="1001.4" y1="595.4" x2="1003.2" y2="759.3" stroke="#5a4331" stroke-width="1.0" opacity="0.27"/>
<line x1="965.4" y1="714.5" x2="967.1" y2="1070.9" stroke="#5a4331" stroke-width="1.0" opacity="0.23"/>
<line x1="1027.9" y1="614.8" x2="1030.1" y2="805.5" stroke="#5a4331" stroke-width="1.0" opacity="0.22"/>
<line x1="735.1" y1="733.5" x2="743.7" y2="978.7" stroke="#5a4331" stroke-width="1.2" opacity="0.16"/>
<line x1="1096.5" y1="781.9" x2="1104.7" y2="1107.0" stroke="#5a4331" stroke-width="1.4" opacity="0.19"/>
<line x1="845.7" y1="576.9" x2="845.8" y2="815.5" stroke="#5a4331" stroke-width="1.0" opacity="0.40"/>
<line x1="741.8" y1="700.6" x2="746.2" y2="948.3" stroke="#5a4331" stroke-width="1.6" opacity="0.40"/>
<line x1="881.9" y1="710.6" x2="883.0" y2="885.5" stroke="#5a4331" stroke-width="1.6" opacity="0.29"/>
<line x1="875.4" y1="716.9" x2="878.9" y2="866.1" stroke="#5a4331" stroke-width="1.1" opacity="0.36"/>
<line x1="690.7" y1="733.8" x2="691.0" y2="881.9" stroke="#5a4331" stroke-width="1.2" opacity="0.32"/>
<line x1="723.9" y1="534.7" x2="729.0" y2="893.7" stroke="#5a4331" stroke-width="1.2" opacity="0.30"/>
<line x1="749.0" y1="425.4" x2="947.7" y2="456.5" stroke="#5a4331" stroke-width="0.8" opacity="0.36"/>
<line x1="703.0" y1="399.9" x2="930.6" y2="425.0" stroke="#5a4331" stroke-width="0.9" opacity="0.38"/>
<line x1="717.8" y1="383.5" x2="1009.1" y2="424.7" stroke="#5a4331" stroke-width="0.7" opacity="0.21"/>
<line x1="833.6" y1="418.8" x2="1092.7" y2="455.9" stroke="#5a4331" stroke-width="0.9" opacity="0.20"/>
<line x1="779.0" y1="475.3" x2="994.8" y2="511.5" stroke="#5a4331" stroke-width="1.2" opacity="0.15"/>
<line x1="681.0" y1="460.0" x2="906.8" y2="496.8" stroke="#5a4331" stroke-width="0.7" opacity="0.18"/>
<line x1="740.9" y1="390.0" x2="891.0" y2="409.3" stroke="#5a4331" stroke-width="1.2" opacity="0.21"/>
<line x1="672.0" y1="439.0" x2="863.9" y2="469.7" stroke="#5a4331" stroke-width="1.4" opacity="0.18"/>
<line x1="674.5" y1="416.5" x2="772.4" y2="432.4" stroke="#5a4331" stroke-width="1.2" opacity="0.23"/>
<line x1="742.0" y1="460.0" x2="921.9" y2="477.6" stroke="#5a4331" stroke-width="0.7" opacity="0.41"/>
<line x1="740.9" y1="477.8" x2="999.8" y2="514.9" stroke="#5a4331" stroke-width="0.7" opacity="0.19"/>
<line x1="825.3" y1="422.6" x2="1077.2" y2="458.9" stroke="#5a4331" stroke-width="1.4" opacity="0.21"/>
<line x1="631.9" y1="392.4" x2="880.6" y2="428.0" stroke="#5a4331" stroke-width="1.0" opacity="0.34"/>
<line x1="832.5" y1="406.3" x2="1092.5" y2="444.1" stroke="#5a4331" stroke-width="1.3" opacity="0.41"/>
<line x1="785.3" y1="386.1" x2="947.1" y2="410.9" stroke="#5a4331" stroke-width="1.3" opacity="0.41"/>
<line x1="673.1" y1="458.3" x2="922.8" y2="487.1" stroke="#5a4331" stroke-width="1.4" opacity="0.41"/>
<line x1="805.2" y1="410.6" x2="991.7" y2="430.6" stroke="#5a4331" stroke-width="1.3" opacity="0.22"/>
<line x1="653.3" y1="370.6" x2="814.3" y2="394.2" stroke="#5a4331" stroke-width="1.5" opacity="0.23"/>
<line x1="641.0" y1="543.8" x2="650.0" y2="934.0" stroke="#54402f" stroke-width="3" opacity="0.85"/><line x1="641.0" y1="543.8" x2="757.2" y2="562.1" stroke="#5a4533" stroke-width="3" opacity="0.8"/><line x1="757.2" y1="562.1" x2="765.3" y2="962.8" stroke="#5e4836" stroke-width="2.5" opacity="0.8"/><line x1="650.0" y1="934.0" x2="765.3" y2="962.8" stroke="#5a4533" stroke-width="2.5" opacity="0.75"/><line x1="652.0" y1="938.3" x2="765.4" y2="966.7" stroke="#a78d74" stroke-width="1.5" opacity="0.6"/><line x1="759.1" y1="562.4" x2="767.2" y2="963.3" stroke="#a78d74" stroke-width="1.5" opacity="0.5"/><line x1="670.8" y1="580.3" x2="753.0" y2="593.9" stroke="#5e4735" stroke-width="1.5" opacity="0.5"/><line x1="670.8" y1="580.3" x2="678.7" y2="934.8" stroke="#a08670" stroke-width="1.2" opacity="0.35"/>
<line x1="867.7" y1="585.5" x2="874.9" y2="991.5" stroke="#54402f" stroke-width="3" opacity="0.85"/><line x1="867.7" y1="585.5" x2="1004.2" y2="607.2" stroke="#5a4533" stroke-width="3" opacity="0.8"/><line x1="1004.2" y1="607.2" x2="1010.4" y2="1025.4" stroke="#5e4836" stroke-width="2.5" opacity="0.8"/><line x1="874.9" y1="991.5" x2="1010.4" y2="1025.4" stroke="#5a4533" stroke-width="2.5" opacity="0.75"/><line x1="876.9" y1="996.0" x2="1010.5" y2="1029.5" stroke="#a78d74" stroke-width="1.5" opacity="0.6"/><line x1="1006.2" y1="607.5" x2="1012.3" y2="1025.8" stroke="#a78d74" stroke-width="1.5" opacity="0.5"/><line x1="897.3" y1="623.7" x2="999.9" y2="640.8" stroke="#5e4735" stroke-width="1.5" opacity="0.5"/><line x1="897.3" y1="623.7" x2="903.6" y2="992.0" stroke="#a08670" stroke-width="1.2" opacity="0.35"/>
<line x1="652.0" y1="1012.0" x2="1112.0" y2="1140.0" stroke="#5e4837" stroke-width="3" opacity="0.5"/>
<polygon points="652.0,987.0 660.0,989.0 660.0,1043.0 652.0,1041.0" fill="#5a4433"/>
<polygon points="624.6,380.5 1058.4,432.5 1059.9,540.4 626.9,478.6" fill="none" stroke="#6a523f" stroke-width="1.6" opacity="0.45"/>
<polygon points="606.0,350.0 624.2,359.6 626.9,478.6 609.1,479.1" fill="#a38a71" opacity="0.45"/>
<polygon points="1058.4,432.5 1092.0,405.0 1093.9,550.1 1059.9,540.4" fill="#7d644e" opacity="0.4"/>
<line x1="606.1" y1="352.5" x2="1092.0" y2="407.8" stroke="#4d3a2b" stroke-width="3"/>
<line x1="609.1" y1="481.7" x2="1093.9" y2="551.5" stroke="#463426" stroke-width="4"/>
<line x1="611.6" y1="485.8" x2="623.4" y2="980.6" stroke="#6b543f" stroke-width="2"/>
<line x1="781.8" y1="510.5" x2="782.9" y2="566.2" stroke="#6e5642" stroke-width="2" opacity="0.7"/>
<line x1="833.6" y1="518.0" x2="843.2" y2="1038.3" stroke="#5e4836" stroke-width="2" opacity="0.8"/>
<line x1="866.6" y1="522.8" x2="867.7" y2="585.5" stroke="#6e5642" stroke-width="1.5" opacity="0.6"/>
<line x1="1079.4" y1="553.6" x2="1086.6" y2="1102.2" stroke="#5a4534" stroke-width="3" opacity="0.8"/>
<line x1="621.0" y1="978.1" x2="1101.0" y2="1103.9" stroke="#54402f" stroke-width="3" opacity="0.8"/>
<line x1="650.0" y1="934.0" x2="842.4" y2="995.3" stroke="#6b543f" stroke-width="1.2" opacity="0.35"/>
<path d="M1091 406 L1099 900 L1117 1172" fill="none" stroke="#4c3a2c" stroke-width="4" opacity="0.7"/>
<path d="M1097 406 L1105 900 L1123 1170" fill="none" stroke="#8a7058" stroke-width="2" opacity="0.3"/>
<ellipse cx="794" cy="561" rx="11" ry="13" fill="#3d3128" opacity="0.35"/>
<rect x="780" y="545" width="20" height="26" rx="7" fill="#8a8176"/>
<rect x="782" y="547" width="12" height="14" rx="5" fill="#a39b90"/>
<ellipse cx="838" cy="568" rx="11" ry="13" fill="#3d3128" opacity="0.35"/>
<rect x="824" y="552" width="20" height="26" rx="7" fill="#8a8176"/>
<rect x="826" y="554" width="12" height="14" rx="5" fill="#a39b90"/>
<polygon points="601.0,321.0 893.0,278.0 1361.0,321.0 1091.0,377.0" fill="url(#topG)"/>
<polygon points="601.0,321.0 1091.0,377.0 1092.0,405.0 601.0,349.0" fill="url(#edgeF)"/>
<polygon points="1091.0,377.0 1361.0,321.0 1360.0,350.0 1092.0,405.0" fill="#cacaca"/>
<line x1="601.0" y1="321.0" x2="1091.0" y2="377.0" stroke="#e4e4e4" stroke-width="1.5"/>
<line x1="1091.0" y1="377.0" x2="1361.0" y2="321.0" stroke="#dadada" stroke-width="1.5"/>
<line x1="601.0" y1="349.0" x2="1092.0" y2="405.0" stroke="#b9b9b9" stroke-width="1"/>
<rect x="478" y="79" width="39" height="38" fill="#343536"/>
<text x="486" y="110" font-size="29" fill="#eeeeee" font-style="italic">7</text><path d="M504 108 L510 98 L510 108 Z" fill="#eee"/>
<rect x="1549" y="1221" width="54" height="53" fill="#333537"/>
<path d="M1567 1234 H1585 V1256 H1567 Z M1567 1243 H1585 M1576 1234 V1256 M1571 1260 H1581" fill="none" stroke="#9a9a9a" stroke-width="1.3"/>
<rect x="1549" y="1292" width="54" height="53" fill="#333537"/>
<path d="M1569 1330 V1312 M1573 1326 C1573 1314 1583 1312 1585 1320 M1580 1306 L1584 1310" fill="none" stroke="#9a9a9a" stroke-width="1.3"/>
<path d="M488 1333 L507 1325 L499 1342 L498 1334 Z" fill="#3a3a3a"/>
</g>
<text x="478" y="43" font-size="32" fill="#dcdcdc" text-anchor="start" letter-spacing="-1.65">SET M: CR</text>
<path d="M639 30 L645 37 L659 23" fill="none" stroke="#dedede" stroke-width="2"/>
<path d="M2188 16 L2202 24 L2202 40 L2188 48 L2174 40 L2174 24 Z M2188 16 V48 M2176 28 C2182 26 2184 34 2180 38 M2192 26 L2199 33 L2192 38" fill="none" stroke="#cfcfcf" stroke-width="1.8"/>
<path d="M2248 44 V30 C2248 22 2258 20 2266 21 C2272 22 2274 26 2275 30 L2275 44 Z M2252 33 C2256 28 2262 28 2264 33 M2256 36 A5 5 0 1 0 2266 36" fill="none" stroke="#cfcfcf" stroke-width="1.8"/>
<path d="M2326 26 C2320 29 2320 35 2326 38 M2340 22 C2332 26 2332 38 2341 42" fill="none" stroke="#cfcfcf" stroke-width="2.2"/>
<circle cx="2325" cy="33" r="2" fill="#cfcfcf"/><circle cx="2342" cy="21" r="2" fill="#cfcfcf"/>
<path d="M2390 22 H2416 V44 H2390 Z M2395 29 H2410 M2395 34 H2412 M2395 39 H2410" fill="none" stroke="#cfcfcf" stroke-width="1.8"/>
<circle cx="2466" cy="32" r="17" fill="#c6c6c6"/>
<path d="M2466 24 L2461 36 L2470 40 M2466 32 L2474 28" fill="none" stroke="#555" stroke-width="1.4"/>
<path d="M2522 23 L2541 42 M2541 23 L2522 42" stroke="#e0e0e0" stroke-width="2.2"/>
<text x="1637" y="103" font-size="22" fill="#b5b5b5" text-anchor="start" >Style</text>
<path d="M2522 99 L2533 87 L2545 99" fill="none" stroke="#4a4a4a" stroke-width="2.5"/>
<circle cx="1668" cy="146" r="9.5" fill="none" stroke="#6a6a6a" stroke-width="4"/>
<rect x="1689" y="140" width="10" height="19" fill="#505050"/>
<rect x="1700" y="134" width="12" height="25" fill="#555"/>
<rect x="1713" y="132" width="11" height="27" fill="#5a5a5a"/>
<rect x="1747.5" y="128.5" width="279" height="37" fill="#353535" stroke="#414141" stroke-width="1.5"/>
<rect x="1789" y="129" width="1.5" height="36" fill="#3c3c3c"/>
<path d="M1762 137 H1779 V157 H1762 Z M1765 145 H1778 M1765 150 H1778" fill="none" stroke="#6a6a6a" stroke-width="1.8"/>
<text x="1799" y="157" font-size="20" fill="#777777" text-anchor="start" letter-spacing="1.2">Maitrrel Dorlclen Murrl</text>
<path d="M2052 140 L2040 148 L2052 157" fill="none" stroke="#e8e8e8" stroke-width="3"/>
<rect x="2066" y="129" width="39" height="36" fill="#b1b1b1"/>
<circle cx="2083" cy="146" r="8" fill="none" stroke="#2c2c2c" stroke-width="2.5"/><path d="M2089 152 L2097 160" stroke="#2c2c2c" stroke-width="2.5"/>
<rect x="2106" y="129" width="100" height="36" fill="#363636" rx="2"/>
<rect x="2148" y="129" width="1" height="36" fill="#3e3e3e"/>
<circle cx="2121" cy="148" r="4" fill="#9a9a9a"/><circle cx="2133" cy="148" r="3" fill="#9a9a9a"/>
<ellipse cx="2187" cy="148" rx="8" ry="6" fill="#b8b8b8"/><rect x="2165" y="144" width="2" height="7" fill="#8a8a8a"/><rect x="2170" y="143" width="2" height="8" fill="#8a8a8a"/>
<text x="2460" y="157" font-size="20" fill="#9a9a9a" text-anchor="start" letter-spacing="0.8">Pach</text>
<path d="M2434 140 V158 M2439 140 V158 M2444 140 V158" stroke="#9a9a9a" stroke-width="1.6"/>
<path d="M2520 143 L2528 149 L2520 155 Z" fill="#9a9a9a"/>
<rect x="1620" y="179" width="920" height="2" fill="#353636"/>
<text x="1639" y="208" font-size="28" fill="#ececec" text-anchor="start" >Canignick</text>
<path d="M2509 199 H2527 M2518 190 V208" stroke="#bdbdbd" stroke-width="1.8"/>
<text x="1639" y="478" font-size="28" fill="#ececec" text-anchor="start" >Hagerorss</text>
<path d="M2509 469 H2527 M2518 460 V478" stroke="#bdbdbd" stroke-width="1.8"/>
<text x="1639" y="747" font-size="28" fill="#ececec" text-anchor="start" >Kantemille</text>
<path d="M2509 738 H2527 M2518 729 V747" stroke="#bdbdbd" stroke-width="1.8"/>
<rect x="1620" y="222" width="920" height="2.5" fill="#3a3b3c"/>
<rect x="1620" y="489" width="920" height="2.5" fill="#3a3b3c"/>
<rect x="1620" y="762" width="920" height="2.5" fill="#3a3b3c"/>
<rect x="2541" y="236" width="19" height="1131" fill="#2f2f2f"/>
<rect x="2542" y="252" width="17" height="718" fill="#606060"/>
<path d="M2544 246 L2551 235 L2558 246 Z" fill="#e0e0e0"/>
<rect x="1654.5" y="241.5" width="80" height="152" fill="#38393a" stroke="#4e4e4e" stroke-width="1.2"/>
<path d="M1664 273 C1680 268 1700 272 1735 273 L1735 308 L1694 308 L1694 313 L1664 313 Z" fill="#b59472"/>
<line x1="1665.0" y1="281.0" x2="1734.0" y2="281.0" stroke="#9e7c5c" stroke-width="1" opacity="0.7"/>
<line x1="1665.0" y1="289.0" x2="1734.0" y2="289.0" stroke="#9e7c5c" stroke-width="1" opacity="0.7"/>
<line x1="1665.0" y1="297.0" x2="1734.0" y2="297.0" stroke="#9e7c5c" stroke-width="1" opacity="0.7"/>
<line x1="1665.0" y1="304.0" x2="1734.0" y2="304.0" stroke="#9e7c5c" stroke-width="1" opacity="0.7"/>
<path d="M1673 335 V367 M1681 335 V367 M1690 335 V367" stroke="#d8d8d8" stroke-width="3"/>
<path d="M1710 352 C1716 348 1722 352 1733 347 L1733 366 L1710 366 Z" fill="#6a6a6a"/>
<rect x="1778" y="242" width="144" height="152" fill="#373a3d"/>
<rect x="1964" y="242" width="146" height="152" fill="#373a3d"/>
<rect x="2155" y="242" width="145" height="152" fill="#373a3d"/>
<rect x="2344" y="242" width="150" height="152" fill="#373a3d"/>
<polygon points="1784.0,267.2 1788.0,254.0 1914.3,254.0 1917.0,263.2 1878.4,271.2" fill="#b9a58e"/><polygon points="1878.4,271.2 1917.0,263.2 1917.0,370.2 1878.4,386.0" fill="#75624f"/><polygon points="1784.0,267.2 1878.4,271.2 1878.4,386.0 1785.3,359.6" fill="#ad967d"/><line x1="1878.4" y1="271.2" x2="1878.4" y2="386.0" stroke="#5f5244" stroke-width="1" opacity="0.6"/><line x1="1784.0" y1="267.2" x2="1878.4" y2="271.2" stroke="#b9a590" stroke-width="1" opacity="0.7"/><polygon points="1784.0,267.2 1878.4,271.2 1878.4,386.0 1785.3,359.6" fill="none" stroke="#675a4b" stroke-width="0.8" opacity="0.5"/>
<path d="M1820 300 H1850" stroke="#7a6a5a" stroke-width="3"/>
<path d="M1800 285 L1860 292 L1868 340 L1845 358 L1808 330 Z" fill="#c5b29e" opacity="0.45"/>
<polygon points="1970.0,266.7 1974.0,252.0 2102.3,252.0 2105.0,262.3 2067.2,270.8" fill="#e0d4c5"/><polygon points="2067.2,270.8 2105.0,262.3 2105.0,364.6 2067.2,386.0" fill="#c4b29b"/><polygon points="1970.0,266.7 2067.2,270.8 2067.2,386.0 1971.3,355.2" fill="#d8cab9"/><line x1="2067.2" y1="270.8" x2="2067.2" y2="386.0" stroke="#766f65" stroke-width="1" opacity="0.6"/><line x1="1970.0" y1="266.7" x2="2067.2" y2="270.8" stroke="#ddd1c3" stroke-width="1" opacity="0.7"/><polygon points="1970.0,266.7 2067.2,270.8 2067.2,386.0 1971.3,355.2" fill="none" stroke="#81796f" stroke-width="0.8" opacity="0.5"/>
<path d="M1972 303 L2067 322" stroke="#a8998a" stroke-width="1.5"/><path d="M2005 274 L2030 276 M2005 318 L2030 322" stroke="#8a7f74" stroke-width="3"/>
<polygon points="2159.0,265.3 2163.1,252.0 2294.2,252.0 2297.0,261.3 2261.1,269.3" fill="#b09478"/><polygon points="2261.1,269.3 2297.0,261.3 2297.0,362.4 2261.1,385.0" fill="#9c8066"/><polygon points="2159.0,265.3 2261.1,269.3 2261.1,385.0 2160.4,351.8" fill="#a38569"/><line x1="2249.1" y1="274.4" x2="2249.3" y2="377.7" stroke="#6e5a47" stroke-width="0.8" opacity="0.39"/><line x1="2246.1" y1="274.3" x2="2246.3" y2="376.8" stroke="#6e5a47" stroke-width="0.8" opacity="0.17"/><line x1="2218.5" y1="272.8" x2="2219.1" y2="368.0" stroke="#6e5a47" stroke-width="0.8" opacity="0.26"/><line x1="2212.9" y1="272.5" x2="2213.5" y2="366.2" stroke="#6e5a47" stroke-width="0.8" opacity="0.18"/><line x1="2181.8" y1="270.8" x2="2182.8" y2="356.4" stroke="#6e5a47" stroke-width="0.8" opacity="0.26"/><line x1="2184.5" y1="271.0" x2="2185.4" y2="357.2" stroke="#6e5a47" stroke-width="0.8" opacity="0.26"/><line x1="2166.4" y1="270.0" x2="2167.6" y2="351.5" stroke="#6e5a47" stroke-width="0.8" opacity="0.17"/><line x1="2229.4" y1="273.4" x2="2229.8" y2="371.5" stroke="#6e5a47" stroke-width="0.8" opacity="0.26"/><line x1="2211.3" y1="272.4" x2="2211.9" y2="365.7" stroke="#6e5a47" stroke-width="0.8" opacity="0.33"/><line x1="2275.0" y1="269.2" x2="2275.0" y2="373.2" stroke="#75604c" stroke-width="0.8" opacity="0.35"/><line x1="2266.4" y1="271.1" x2="2266.4" y2="378.7" stroke="#75604c" stroke-width="0.8" opacity="0.35"/><line x1="2287.2" y1="266.5" x2="2287.2" y2="365.6" stroke="#75604c" stroke-width="0.8" opacity="0.35"/><line x1="2281.6" y1="267.7" x2="2281.6" y2="369.1" stroke="#75604c" stroke-width="0.8" opacity="0.35"/><line x1="2283.6" y1="267.3" x2="2283.6" y2="367.8" stroke="#75604c" stroke-width="0.8" opacity="0.35"/><line x1="2210.1" y1="270.3" x2="2210.7" y2="365.3" stroke="#6e5a47" stroke-width="1.3"/><polygon points="2164.2,269.9 2256.0,274.8 2256.1,375.3 2165.3,347.3" fill="none" stroke="#6e5a47" stroke-width="1" opacity="0.6"/><line x1="2261.1" y1="269.3" x2="2261.1" y2="385.0" stroke="#594939" stroke-width="1" opacity="0.6"/><line x1="2159.0" y1="265.3" x2="2261.1" y2="269.3" stroke="#b0977f" stroke-width="1" opacity="0.7"/><polygon points="2159.0,265.3 2261.1,269.3 2261.1,385.0 2160.4,351.8" fill="none" stroke="#614f3f" stroke-width="0.8" opacity="0.5"/>
<polygon points="2350.0,266.4 2354.1,253.0 2485.2,253.0 2488.0,262.4 2450.7,270.4" fill="#d8c8b2"/><polygon points="2450.7,270.4 2488.0,262.4 2488.0,368.2 2450.7,387.0" fill="#cdb89e"/><polygon points="2350.0,266.4 2450.7,270.4 2450.7,387.0 2351.4,360.2" fill="#d2bfa5"/><line x1="2450.7" y1="270.4" x2="2450.7" y2="387.0" stroke="#73695a" stroke-width="1" opacity="0.6"/><line x1="2350.0" y1="266.4" x2="2450.7" y2="270.4" stroke="#d8c8b2" stroke-width="1" opacity="0.7"/><polygon points="2350.0,266.4 2450.7,270.4 2450.7,387.0 2351.4,360.2" fill="none" stroke="#7e7263" stroke-width="0.8" opacity="0.5"/>
<path d="M2355 273 L2445 280 L2445 378 L2355 352 Z" fill="#a1815f"/><path d="M2390 291 H2420" stroke="#7a6048" stroke-width="2"/>
<text x="1691" y="428" font-size="21" fill="#dedede" text-anchor="middle" >310 sined</text>
<text x="1852" y="428" font-size="21" fill="#dedede" text-anchor="middle" >Poduren</text>
<text x="2037" y="428" font-size="21" fill="#dedede" text-anchor="middle" >Oak</text>
<text x="2227" y="428" font-size="21" fill="#dedede" text-anchor="middle" >PEB Cringes</text>
<text x="2417" y="428" font-size="21" fill="#dedede" text-anchor="middle" >Muchire</text>
<rect x="1654.5" y="511.5" width="80" height="155" fill="none" stroke="#505050" stroke-width="1.2"/>
<path d="M1694 541 V527 M1688 533 L1694 527 L1700 533" fill="none" stroke="#cfcfcf" stroke-width="1.6"/>
<circle cx="1672" cy="575" r="9" fill="none" stroke="#cfcfcf" stroke-width="1.8"/>
<text x="1690" y="583" font-size="22" fill="#cfcfcf" text-anchor="start" >a</text>
<text x="1708" y="583" font-size="22" fill="#cfcfcf" text-anchor="start" >k</text>
<circle cx="1716" cy="624" r="9" fill="none" stroke="#cfcfcf" stroke-width="1.8"/>
<path d="M1665 614 C1672 612 1680 624 1692 630 C1686 636 1670 628 1665 618 M1690 622 L1698 628" fill="none" stroke="#cfcfcf" stroke-width="1.6"/>
<rect x="1778" y="512" width="144" height="154" fill="#373a3d"/>
<rect x="1964" y="512" width="146" height="154" fill="#373a3d"/>
<rect x="2155" y="512" width="145" height="154" fill="#373a3d"/>
<rect x="2344" y="512" width="150" height="154" fill="#373a3d"/>
<polygon points="1786.0,529.6 1790.0,520.0 1917.3,520.0 1920.0,526.7 1886.5,533.7" fill="#4d3c30"/><polygon points="1886.5,533.7 1920.0,526.7 1920.0,632.3 1886.5,657.0" fill="#3f3129"/><polygon points="1786.0,529.6 1886.5,533.7 1886.5,657.0 1787.3,629.6" fill="#5f4b3b"/><line x1="1825.2" y1="536.6" x2="1825.9" y2="637.0" stroke="#403328" stroke-width="0.8" opacity="0.38"/><line x1="1867.3" y1="538.9" x2="1867.6" y2="648.2" stroke="#403328" stroke-width="0.8" opacity="0.20"/><line x1="1869.9" y1="539.0" x2="1870.1" y2="648.9" stroke="#403328" stroke-width="0.8" opacity="0.31"/><line x1="1794.9" y1="535.1" x2="1796.0" y2="629.0" stroke="#403328" stroke-width="0.8" opacity="0.39"/><line x1="1814.2" y1="536.1" x2="1815.1" y2="634.1" stroke="#403328" stroke-width="0.8" opacity="0.23"/><line x1="1829.4" y1="536.9" x2="1830.1" y2="638.1" stroke="#403328" stroke-width="0.8" opacity="0.30"/><line x1="1802.3" y1="535.4" x2="1803.4" y2="630.9" stroke="#403328" stroke-width="0.8" opacity="0.32"/><line x1="1866.3" y1="538.8" x2="1866.6" y2="647.9" stroke="#403328" stroke-width="0.8" opacity="0.28"/><line x1="1862.9" y1="538.6" x2="1863.2" y2="647.0" stroke="#403328" stroke-width="0.8" opacity="0.31"/><line x1="1912.0" y1="531.4" x2="1912.0" y2="635.3" stroke="#2f241e" stroke-width="0.8" opacity="0.35"/><line x1="1894.7" y1="535.0" x2="1894.7" y2="648.0" stroke="#2f241e" stroke-width="0.8" opacity="0.35"/><line x1="1899.5" y1="534.0" x2="1899.5" y2="644.5" stroke="#2f241e" stroke-width="0.8" opacity="0.35"/><line x1="1902.4" y1="533.4" x2="1902.4" y2="642.3" stroke="#2f241e" stroke-width="0.8" opacity="0.35"/><line x1="1892.6" y1="535.4" x2="1892.6" y2="649.5" stroke="#2f241e" stroke-width="0.8" opacity="0.35"/><line x1="1836.3" y1="535.0" x2="1836.9" y2="640.0" stroke="#403328" stroke-width="1.3"/><polygon points="1791.1,534.9 1881.5,539.6 1881.5,647.1 1792.2,623.9" fill="none" stroke="#403328" stroke-width="1" opacity="0.6"/><line x1="1886.5" y1="533.7" x2="1886.5" y2="657.0" stroke="#342920" stroke-width="1" opacity="0.6"/><line x1="1786.0" y1="529.6" x2="1886.5" y2="533.7" stroke="#766558" stroke-width="1" opacity="0.7"/><polygon points="1786.0,529.6 1886.5,533.7 1886.5,657.0 1787.3,629.6" fill="none" stroke="#392d23" stroke-width="0.8" opacity="0.5"/>
<polygon points="1971.0,529.9 1975.0,520.0 2101.3,520.0 2104.0,527.0 2076.1,534.2" fill="#a88868"/><polygon points="2076.1,534.2 2104.0,527.0 2104.0,642.1 2076.1,662.0" fill="#8a6c50"/><polygon points="1971.0,529.9 2076.1,534.2 2076.1,662.0 1972.3,633.6" fill="#9a7a5b"/><line x1="2046.9" y1="539.1" x2="2047.3" y2="650.5" stroke="#68523d" stroke-width="0.8" opacity="0.20"/><line x1="1995.7" y1="536.4" x2="1996.6" y2="637.0" stroke="#68523d" stroke-width="0.8" opacity="0.30"/><line x1="1981.7" y1="535.7" x2="1982.8" y2="633.3" stroke="#68523d" stroke-width="0.8" opacity="0.34"/><line x1="2048.6" y1="539.2" x2="2048.9" y2="650.9" stroke="#68523d" stroke-width="0.8" opacity="0.16"/><line x1="2040.9" y1="538.8" x2="2041.3" y2="648.9" stroke="#68523d" stroke-width="0.8" opacity="0.28"/><line x1="2036.4" y1="538.5" x2="2036.8" y2="647.7" stroke="#68523d" stroke-width="0.8" opacity="0.39"/><line x1="2069.6" y1="540.3" x2="2069.6" y2="656.5" stroke="#68523d" stroke-width="0.8" opacity="0.25"/><line x1="2056.1" y1="539.5" x2="2056.3" y2="652.9" stroke="#68523d" stroke-width="0.8" opacity="0.35"/><line x1="2068.2" y1="540.2" x2="2068.2" y2="656.1" stroke="#68523d" stroke-width="0.8" opacity="0.16"/><line x1="2099.8" y1="531.0" x2="2099.8" y2="642.1" stroke="#67513c" stroke-width="0.8" opacity="0.35"/><line x1="2083.8" y1="535.2" x2="2083.8" y2="653.5" stroke="#67513c" stroke-width="0.8" opacity="0.35"/><line x1="2081.8" y1="535.7" x2="2081.8" y2="655.0" stroke="#67513c" stroke-width="0.8" opacity="0.35"/><line x1="2092.2" y1="533.0" x2="2092.2" y2="647.5" stroke="#67513c" stroke-width="0.8" opacity="0.35"/><line x1="2097.6" y1="531.6" x2="2097.6" y2="643.7" stroke="#67513c" stroke-width="0.8" opacity="0.35"/><line x1="2023.6" y1="535.5" x2="2024.2" y2="644.3" stroke="#68523d" stroke-width="1.3"/><polygon points="1976.3,535.4 2070.8,540.3 2070.9,651.7 1977.4,627.7" fill="none" stroke="#68523d" stroke-width="1" opacity="0.6"/><line x1="2076.1" y1="534.2" x2="2076.1" y2="662.0" stroke="#544332" stroke-width="1" opacity="0.6"/><line x1="1971.0" y1="529.9" x2="2076.1" y2="534.2" stroke="#a98d73" stroke-width="1" opacity="0.7"/><polygon points="1971.0,529.9 2076.1,534.2 2076.1,662.0 1972.3,633.6" fill="none" stroke="#5c4936" stroke-width="0.8" opacity="0.5"/>
<polygon points="2160.0,530.1 2164.1,520.0 2293.3,520.0 2296.0,527.1 2267.4,534.4" fill="#ad8d6d"/><polygon points="2267.4,534.4 2296.0,527.1 2296.0,643.8 2267.4,664.0" fill="#8d6f53"/><polygon points="2160.0,530.1 2267.4,534.4 2267.4,664.0 2161.4,635.2" fill="#9f7e5e"/><line x1="2228.1" y1="538.8" x2="2228.6" y2="649.8" stroke="#6c553f" stroke-width="0.8" opacity="0.33"/><line x1="2257.9" y1="540.4" x2="2258.0" y2="657.6" stroke="#6c553f" stroke-width="0.8" opacity="0.20"/><line x1="2171.8" y1="535.9" x2="2172.9" y2="635.1" stroke="#6c553f" stroke-width="0.8" opacity="0.36"/><line x1="2197.6" y1="537.3" x2="2198.4" y2="641.9" stroke="#6c553f" stroke-width="0.8" opacity="0.24"/><line x1="2244.2" y1="539.7" x2="2244.5" y2="654.0" stroke="#6c553f" stroke-width="0.8" opacity="0.20"/><line x1="2253.3" y1="540.2" x2="2253.5" y2="656.4" stroke="#6c553f" stroke-width="0.8" opacity="0.27"/><line x1="2172.3" y1="536.0" x2="2173.4" y2="635.3" stroke="#6c553f" stroke-width="0.8" opacity="0.38"/><line x1="2220.8" y1="538.5" x2="2221.4" y2="647.9" stroke="#6c553f" stroke-width="0.8" opacity="0.17"/><line x1="2246.5" y1="539.8" x2="2246.7" y2="654.6" stroke="#6c553f" stroke-width="0.8" opacity="0.34"/><line x1="2287.2" y1="532.3" x2="2287.2" y2="647.0" stroke="#69533e" stroke-width="0.8" opacity="0.35"/><line x1="2285.3" y1="532.8" x2="2285.3" y2="648.4" stroke="#69533e" stroke-width="0.8" opacity="0.35"/><line x1="2293.0" y1="530.8" x2="2293.0" y2="643.0" stroke="#69533e" stroke-width="0.8" opacity="0.35"/><line x1="2270.6" y1="536.6" x2="2270.6" y2="658.8" stroke="#69533e" stroke-width="0.8" opacity="0.35"/><line x1="2292.6" y1="530.9" x2="2292.6" y2="643.3" stroke="#69533e" stroke-width="0.8" opacity="0.35"/><line x1="2213.7" y1="535.8" x2="2214.4" y2="646.1" stroke="#6c553f" stroke-width="1.3"/><polygon points="2165.4,535.6 2262.1,540.6 2262.1,653.6 2166.6,629.2" fill="none" stroke="#6c553f" stroke-width="1" opacity="0.6"/><line x1="2267.4" y1="534.4" x2="2267.4" y2="664.0" stroke="#574533" stroke-width="1" opacity="0.6"/><line x1="2160.0" y1="530.1" x2="2267.4" y2="534.4" stroke="#ad9176" stroke-width="1" opacity="0.7"/><polygon points="2160.0,530.1 2267.4,534.4 2267.4,664.0 2161.4,635.2" fill="none" stroke="#5f4b38" stroke-width="0.8" opacity="0.5"/>
<polygon points="2349.0,529.9 2353.1,520.0 2484.2,520.0 2487.0,527.0 2458.0,534.2" fill="#ab8b6c"/><polygon points="2458.0,534.2 2487.0,527.0 2487.0,642.1 2458.0,662.0" fill="#8a6d52"/><polygon points="2349.0,529.9 2458.0,534.2 2458.0,662.0 2350.4,633.6" fill="#9b7b5d"/><line x1="2365.6" y1="536.0" x2="2366.7" y2="634.7" stroke="#69533f" stroke-width="0.8" opacity="0.18"/><line x1="2413.1" y1="538.3" x2="2413.6" y2="646.8" stroke="#69533f" stroke-width="0.8" opacity="0.19"/><line x1="2367.5" y1="536.0" x2="2368.6" y2="635.2" stroke="#69533f" stroke-width="0.8" opacity="0.27"/><line x1="2395.5" y1="537.5" x2="2396.2" y2="642.3" stroke="#69533f" stroke-width="0.8" opacity="0.20"/><line x1="2392.9" y1="537.3" x2="2393.7" y2="641.6" stroke="#69533f" stroke-width="0.8" opacity="0.36"/><line x1="2367.4" y1="536.0" x2="2368.4" y2="635.1" stroke="#69533f" stroke-width="0.8" opacity="0.20"/><line x1="2357.2" y1="535.5" x2="2358.4" y2="632.6" stroke="#69533f" stroke-width="0.8" opacity="0.21"/><line x1="2363.8" y1="535.9" x2="2364.9" y2="634.2" stroke="#69533f" stroke-width="0.8" opacity="0.40"/><line x1="2385.4" y1="536.9" x2="2386.2" y2="639.7" stroke="#69533f" stroke-width="0.8" opacity="0.40"/><line x1="2463.9" y1="535.7" x2="2463.9" y2="655.0" stroke="#67513d" stroke-width="0.8" opacity="0.35"/><line x1="2481.9" y1="531.2" x2="2481.9" y2="642.6" stroke="#67513d" stroke-width="0.8" opacity="0.35"/><line x1="2472.7" y1="533.5" x2="2472.7" y2="649.0" stroke="#67513d" stroke-width="0.8" opacity="0.35"/><line x1="2476.9" y1="532.5" x2="2476.9" y2="646.0" stroke="#67513d" stroke-width="0.8" opacity="0.35"/><line x1="2476.3" y1="532.6" x2="2476.3" y2="646.5" stroke="#67513d" stroke-width="0.8" opacity="0.35"/><line x1="2403.5" y1="535.5" x2="2404.2" y2="644.3" stroke="#69533f" stroke-width="1.3"/><polygon points="2354.5,535.4 2452.6,540.3 2452.6,651.7 2355.7,627.7" fill="none" stroke="#69533f" stroke-width="1" opacity="0.6"/><line x1="2458.0" y1="534.2" x2="2458.0" y2="662.0" stroke="#554333" stroke-width="1" opacity="0.6"/><line x1="2349.0" y1="529.9" x2="2458.0" y2="534.2" stroke="#aa8e75" stroke-width="1" opacity="0.7"/><polygon points="2349.0,529.9 2458.0,534.2 2458.0,662.0 2350.4,633.6" fill="none" stroke="#5d4937" stroke-width="0.8" opacity="0.5"/>
<path d="M1843.0 550 H1857.0" stroke="#e8e0d0" stroke-width="2"/>
<path d="M2030.0 550 H2044.0" stroke="#e8e0d0" stroke-width="2"/>
<path d="M2220.5 550 H2234.5" stroke="#e8e0d0" stroke-width="2"/>
<path d="M2412.0 550 H2426.0" stroke="#e8e0d0" stroke-width="2"/>
<text x="1691" y="700" font-size="21" fill="#dedede" text-anchor="middle" >347 Vimer</text>
<text x="1852" y="700" font-size="21" fill="#dedede" text-anchor="middle" >Soit</text>
<text x="2036" y="700" font-size="21" fill="#dedede" text-anchor="middle" >Suioher</text>
<text x="2227" y="700" font-size="21" fill="#dedede" text-anchor="middle" >Dreel Sturoy</text>
<text x="2416" y="700" font-size="21" fill="#dedede" text-anchor="middle" >Fialy</text>
<path d="M1661 814 L1670 808 L1735 812 C1742 813 1743 818 1742 822 L1742 836 L1736 842 L1664 836 L1661 832 Z" fill="#c6c6c6"/><path d="M1661 814 L1670 808 L1735 812 L1741 818 L1665 818 Z" fill="#dedede"/><path d="M1734 818 L1742 822 L1742 836 L1736 842 Z" fill="#a8a8a8"/><path d="M1674 836 L1687 837 L1687 866 L1675 867 Z" fill="#b4b4b4"/>
<path d="M1830 812 L1852 798 L1900 800 L1899 870 L1852 879 L1832 862 Z" fill="#6e6e6e"/><path d="M1830 812 L1852 818 L1852 879 L1832 862 Z" fill="#c2c2c2"/><path d="M1838 805 L1858 796 L1900 798 L1880 808 L1852 812 Z" fill="#dcdcdc"/><path d="M1852 818 L1896 806 L1896 866 L1858 874" fill="none" stroke="#bdbdbd" stroke-width="2"/><path d="M1835 820 L1850 824 M1836 835 L1850 838" stroke="#8a8a8a" stroke-width="2"/>
<path d="M1989 826 L2000 820 L2062 830 L2080 836 L2082 846 L2064 856 L2058 850 L2072 844 L1992 834 Z" fill="#b4b4b4"/><path d="M1996 828 L2066 838" stroke="#5a5a5a" stroke-width="2.5"/><path d="M2062 832 L2066 822 L2070 834" fill="none" stroke="#9a9a9a" stroke-width="2"/>
<path d="M2157 820 L2180 809 L2247 818 L2232 830 Z" fill="#e8e8e8"/><path d="M2157 820 L2232 830 L2232 873 L2158 856 Z" fill="#cfcfcf"/><path d="M2232 830 L2247 818 L2247 858 L2232 873 Z" fill="#b4b4b4"/><path d="M2168 834 L2222 842 M2168 846 L2222 854" stroke="#8e8e8e" stroke-width="1.5"/><path d="M2190 826 L2240 820" stroke="#d0d0d0" stroke-width="2"/>
<text x="1700" y="925" font-size="21" fill="#dedede" text-anchor="middle" >Buskes</text>
<text x="1700" y="952" font-size="21" fill="#dedede" text-anchor="middle" >Miosl</text>
<text x="1865" y="925" font-size="21" fill="#dedede" text-anchor="middle" >Caingsr</text>
<text x="2035" y="925" font-size="21" fill="#dedede" text-anchor="middle" >Auto Fhiick</text>
<text x="2201" y="925" font-size="21" fill="#dedede" text-anchor="middle" >Sohek</text>
<path d="M1683 1012 L1690 1008 L1732 1005 L1733 1020 L1700 1040 L1686 1042 Z" fill="#c2c2c2"/><path d="M1683 1012 L1690 1008 L1732 1005 L1725 1012 Z" fill="#d8d8d8"/>
<circle cx="1684" cy="1045" r="16" fill="#c0c0c0"/><circle cx="1679" cy="1039" r="7" fill="#e6e6e6" opacity="0.7"/>
<path d="M1818 1006 L1842 994 L1914 1009 L1912 1050 L1888 1074 L1824 1060 Z" fill="#8b6f51"/><path d="M1888 1024 L1914 1009 L1912 1050 L1888 1074 Z" fill="#755c44"/><path d="M1818 1006 L1842 994 L1914 1009 L1888 1024 Z" fill="#b39674"/><path d="M1826 1006 L1845 999 L1904 1010 L1886 1019 Z" fill="#98805f"/><path d="M1850 1004 L1880 1010" stroke="#a88b6a" stroke-width="3"/><path d="M1818 1006 L1888 1024 L1914 1009" fill="none" stroke="#c2a580" stroke-width="2"/>
<path d="M1990 1030 L2004 1024 L2060 1028 L2066 1016 L2074 1026 L2078 1018 L2080 1032 L2078 1046 L2060 1050 L1996 1038 Z" fill="#a9a9a9"/><path d="M2000 1032 L2070 1040" stroke="#5a5a5a" stroke-width="2.5"/>
<path d="M2163 1026 L2186 1013 L2241 1020 L2226 1032 Z" fill="#e4e4e4"/><path d="M2172 1025 L2188 1017 L2230 1022 L2220 1029 Z" fill="#b8b8b8"/><path d="M2163 1026 L2226 1032 L2226 1067 L2165 1057 Z" fill="#cdcdcd"/><path d="M2226 1032 L2241 1020 L2241 1054 L2226 1067 Z" fill="#acacac"/><path d="M2176 1040 V1060 M2170 1054 H2184" stroke="#8a8a8a" stroke-width="3"/>
<text x="1700" y="1119" font-size="21" fill="#dedede" text-anchor="middle" >Poshast</text>
<text x="1700" y="1146" font-size="21" fill="#dedede" text-anchor="middle" >usbl</text>
<text x="1863" y="1119" font-size="21" fill="#dedede" text-anchor="middle" >Evatinplied</text>
<text x="1865" y="1146" font-size="21" fill="#dedede" text-anchor="middle" >Syyle</text>
<text x="2032" y="1119" font-size="21" fill="#dedede" text-anchor="middle" >NeviCad Fining</text>
<text x="2201" y="1119" font-size="21" fill="#dedede" text-anchor="middle" >Tioks</text>
<text x="2201" y="1146" font-size="21" fill="#dedede" text-anchor="middle" >Hickding</text>
<text x="1639" y="1247" font-size="27" fill="#e6e6e6" text-anchor="start" >Lons</text>
<path d="M2522 1236 L2530 1245 L2538 1236" fill="none" stroke="#777" stroke-width="1.8"/>
<rect x="1620" y="1262" width="940" height="2.5" fill="#363738"/>
<circle cx="1651" cy="1290" r="9" fill="none" stroke="#cfcfcf" stroke-width="2"/>
<text x="1680" y="1300" font-size="26" fill="#ececec" text-anchor="start" letter-spacing="-1.8">Eak</text>
<line x1="1737.0" y1="1296.5" x2="1845.0" y2="1296.5" stroke="#bdbdbd" stroke-width="2"/>
<line x1="1866.0" y1="1296.5" x2="1905.0" y2="1296.5" stroke="#4a4a4a" stroke-width="1.5"/>
<circle cx="1856" cy="1296" r="10" fill="#a9a9a9"/>
<rect x="1934" y="1288" width="2" height="16" fill="#555"/>
<circle cx="2287" cy="1291" r="11" fill="none" stroke="#9a9a9a" stroke-width="2"/><path d="M2283 1285 L2291 1297" stroke="#9a9a9a" stroke-width="1.5"/>
<rect x="2312" y="1279" width="104" height="26" fill="#4d4d4d"/>
<line x1="2326.0" y1="1293.0" x2="2368.0" y2="1293.0" stroke="#8a8a8a" stroke-width="2"/>
<ellipse cx="2399" cy="1292" rx="14" ry="12" fill="#9a9a9a"/>
<line x1="2418.0" y1="1298.0" x2="2540.0" y2="1298.0" stroke="#6a6a6a" stroke-width="2"/>
<line x1="2418.0" y1="1285.0" x2="2440.0" y2="1285.0" stroke="#6a6a6a" stroke-width="3"/>
<rect x="1620" y="1320" width="940" height="2.5" fill="#363738"/>
<path d="M1643 1355 V1341 L1650 1334 L1660 1336 V1355 Z" fill="none" stroke="#cfcfcf" stroke-width="2"/>
<text x="1681" y="1351" font-size="25" fill="#ececec" text-anchor="start" letter-spacing="-0.6">Ponts Siinoe</text>
<text x="1681" y="1368" font-size="12" fill="#9a9a9a" text-anchor="start" font-weight="bold">Cosulo Joltswit</text>
<path d="M2512 1336 L2521 1332 L2530 1336 L2530 1355 L2521 1359 L2512 1355 Z" fill="#a8a8a8"/><path d="M2512 1344 H2530 M2521 1336 V1359" stroke="#444" stroke-width="1.6"/>
<path d="M149.5 1414.5 V1401 H159 V1385 H173 V1414.5 Z M162 1398.5 H173" fill="none" stroke="#e8e8e8" stroke-width="3"/>
<path d="M252 1388.5 H262 V1414 H252 Z M271 1391 V1413" fill="none" stroke="#e8e8e8" stroke-width="3"/><path d="M262 1404 H271" stroke="#cfcfcf" stroke-width="1.6"/>
<rect x="348" y="1385.5" width="28.5" height="28.5" rx="6" fill="none" stroke="#e4e4e4" stroke-width="2.6"/>
<text x="362" y="1405" font-size="12" fill="#e4e4e4" text-anchor="middle" font-weight="bold">e 8</text>
<text x="481" y="1407" font-size="14" fill="#bdbdbd" text-anchor="start" letter-spacing="0.5">GAMV</text>
<text x="534" y="1410" font-size="25" fill="#dadada" text-anchor="start" letter-spacing="-1.4">Shum EDR</text>
<path d="M661 1397 L664 1402 L661 1407 M676 1397 L679 1402 L676 1407 M695 1397 L698 1402 L695 1407 M712 1399 H730 L722 1407" fill="none" stroke="#bdbdbd" stroke-width="1.8"/>
</svg>
</body></html>
